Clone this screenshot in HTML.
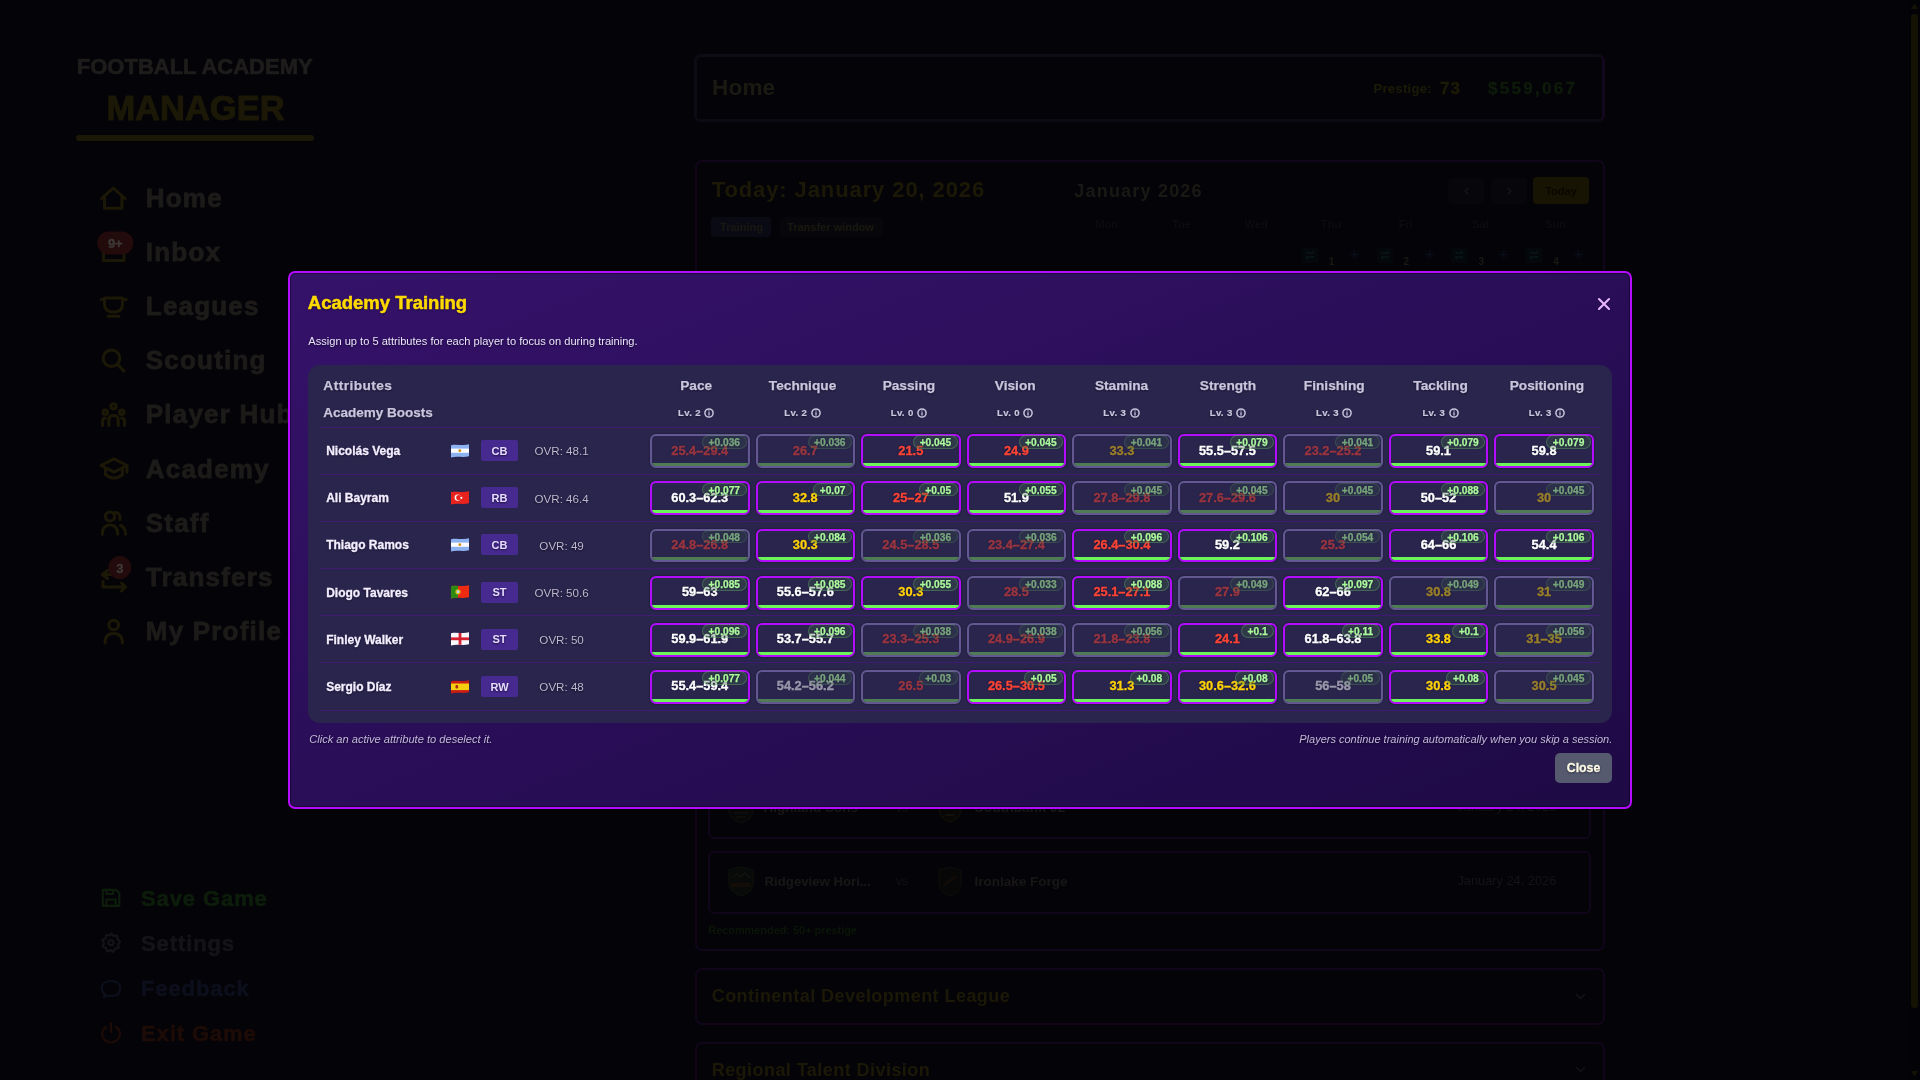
<!DOCTYPE html><html><head><meta charset="utf-8"><title>Academy Training</title><style>
*{margin:0;padding:0;box-sizing:border-box}
html,body{width:1920px;height:1080px;overflow:hidden;background:#040307;font-family:"Liberation Sans",sans-serif}
.t{position:absolute;white-space:nowrap;line-height:1}
.m .t,.ts{text-shadow:0 1px 2px rgba(8,4,30,.7)}
.a{position:absolute}
</style></head><body>
<div style="position:absolute;left:0;top:0;width:1920px;height:1080px;filter:brightness(.68)">
<div class="t" style="left:76.80px;top:56.38px;font-size:22px;color:#2c2a28;font-weight:bold;font-style:normal;-webkit-text-stroke:0.7px #2c2a28">FOOTBALL ACADEMY</div>
<div class="t" style="left:-304.50px;width:1000px;text-align:center;top:91.00px;font-size:34.5px;color:#29240a;font-weight:bold;font-style:normal;-webkit-text-stroke:1px #29240a">MANAGER</div>
<div class="a" style="left:76px;top:135px;width:238px;height:6px;border-radius:3px;background:#29240a"></div>
<div class="t" style="left:145.80px;top:184.69px;font-size:26px;color:#2a2825;font-weight:bold;font-style:normal;letter-spacing:1.2px;-webkit-text-stroke:0.8px #2a2825">Home</div>
<div class="t" style="left:145.80px;top:238.86px;font-size:26px;color:#2a2825;font-weight:bold;font-style:normal;letter-spacing:1.2px;-webkit-text-stroke:0.8px #2a2825">Inbox</div>
<div class="t" style="left:145.80px;top:293.03px;font-size:26px;color:#2a2825;font-weight:bold;font-style:normal;letter-spacing:1.2px;-webkit-text-stroke:0.8px #2a2825">Leagues</div>
<div class="t" style="left:145.80px;top:347.20px;font-size:26px;color:#2a2825;font-weight:bold;font-style:normal;letter-spacing:1.2px;-webkit-text-stroke:0.8px #2a2825">Scouting</div>
<div class="t" style="left:145.80px;top:401.37px;font-size:26px;color:#2a2825;font-weight:bold;font-style:normal;letter-spacing:1.2px;-webkit-text-stroke:0.8px #2a2825">Player Hub</div>
<div class="t" style="left:145.80px;top:455.54px;font-size:26px;color:#2a2825;font-weight:bold;font-style:normal;letter-spacing:1.2px;-webkit-text-stroke:0.8px #2a2825">Academy</div>
<div class="t" style="left:145.80px;top:509.71px;font-size:26px;color:#2a2825;font-weight:bold;font-style:normal;letter-spacing:1.2px;-webkit-text-stroke:0.8px #2a2825">Staff</div>
<div class="t" style="left:145.80px;top:563.88px;font-size:26px;color:#2a2825;font-weight:bold;font-style:normal;letter-spacing:1.2px;-webkit-text-stroke:0.8px #2a2825">Transfers</div>
<div class="t" style="left:145.80px;top:618.05px;font-size:26px;color:#2a2825;font-weight:bold;font-style:normal;letter-spacing:1.2px;-webkit-text-stroke:0.8px #2a2825">My Profile</div>
<svg class="a" style="left:0;top:0" width="300" height="1080" viewBox="0 0 300 1080" fill="none" stroke-linecap="round" stroke-linejoin="round">
<g stroke="#29240a" stroke-width="3">
<path d="M101.5 198.5 L113.3 188 L125 198.5 M104.5 196 V208.3 H122 V196"/>
<path d="M103.5 249 V260.5 H124 V249"/>
<path d="M104.5 298 H122.5 V304.5 Q122.5 312 113.5 312 Q104.5 312 104.5 304.5 Z M101.3 299.5 H104.5 M122.5 299.5 H126.3 M108 316.3 H119"/>
<circle cx="111.5" cy="358.3" r="8.3"/><path d="M117.5 364.5 L124 371"/>
<circle cx="113.5" cy="406.3" r="2.6"/><circle cx="105.3" cy="412.3" r="2.3"/><circle cx="121.7" cy="412.3" r="2.3"/>
<path d="M108.8 425.5 V419.5 Q108.8 415.5 113.5 415.5 Q118.2 415.5 118.2 419.5 V425.5 M102.5 425.5 V421 Q102.5 418 105.3 418 M124.5 425.5 V421 Q124.5 418 121.7 418"/>
<path d="M101 465.5 L114 458.8 L127 465.5 L114 472.2 Z M105.5 468.5 V474.5 Q114 481.5 122.5 474.5 V468.5 M127 465.5 V472"/>
<circle cx="110" cy="516.5" r="4.6"/><path d="M102.3 534.3 Q102.3 525 110 525 Q117.7 525 117.7 534.3 M115.5 512.3 Q120.5 513 120 519.5 M120.5 525.5 Q125.5 527 125.5 534.3"/>
<path d="M107.5 570.5 L102.3 574.5 L107.5 578.5 M102.3 574.5 H117 M103 581.5 V587 H125.5 M121.5 583 L125.5 587 L121.5 591"/>
<circle cx="113.7" cy="625" r="4.8"/><path d="M105 643 Q105 633.5 113.7 633.5 Q122.4 633.5 122.4 643"/>
</g>
<rect x="97.3" y="231.5" width="36" height="23" rx="11.5" fill="#341010"/>
<circle cx="119.8" cy="567.6" r="11.5" fill="#341010"/>
<g stroke-width="2.2">
<path stroke="#132a10" d="M102.8 889.8 H116 L119.3 893 V905.8 H102.8 Z M106.3 905.8 V899.5 H115.7 V905.8 M106.5 890 V894 H113 V890"/>
<path stroke="#1e1d22" d="M111 933.5 L113.5 936 L117 935.5 L117.5 939 L120 941.5 L118 944.3 L118.8 947.8 L115.3 948.5 L113 951.8 L110.5 950 L107 951.5 L106 948 L102.5 946.5 L104 943.3 L102.3 940 L105.5 938.5 L106.3 935 L109.8 935.5 Z"/>
<circle stroke="#1e1d22" cx="111" cy="942.7" r="2.5"/>
<path stroke="#121628" d="M111 981 Q120.2 981 120.2 988.5 Q120.2 996 111 996 Q109 996 107 995.5 L104 997 L104.8 994 Q101.8 992 101.8 988.5 Q101.8 981 111 981 Z"/>
<path stroke="#2a100a" d="M106 1027 Q102 1030 102 1033.5 A9 9 0 0 0 120 1033.5 Q120 1030 116 1027 M111 1023 V1032"/>
</g>
</svg>
<div class="t" style="left:-384.70px;width:1000px;text-align:center;top:236.80px;font-size:13px;color:#5a5450;font-weight:bold;font-style:normal;-webkit-text-stroke:0.3px #5a5450">9+</div>
<div class="t" style="left:-380.20px;width:1000px;text-align:center;top:561.50px;font-size:13px;color:#5a5450;font-weight:bold;font-style:normal;-webkit-text-stroke:0.3px #5a5450">3</div>
<div class="t" style="left:141.00px;top:887.58px;font-size:22px;color:#132a10;font-weight:bold;font-style:normal;letter-spacing:0.9px;-webkit-text-stroke:0.6px #132a10">Save Game</div>
<div class="t" style="left:141.00px;top:932.58px;font-size:22px;color:#1e1d22;font-weight:bold;font-style:normal;letter-spacing:0.9px;-webkit-text-stroke:0.6px #1e1d22">Settings</div>
<div class="t" style="left:141.00px;top:977.58px;font-size:22px;color:#121628;font-weight:bold;font-style:normal;letter-spacing:0.9px;-webkit-text-stroke:0.6px #121628">Feedback</div>
<div class="t" style="left:141.00px;top:1022.58px;font-size:22px;color:#2a100a;font-weight:bold;font-style:normal;letter-spacing:0.9px;-webkit-text-stroke:0.6px #2a100a">Exit Game</div>
<div class="a" style="left:694px;top:54px;width:911px;height:68px;border:3px solid #11101c;border-right-color:#1c0a2c;border-top-color:#14101f;border-radius:7px"></div>
<div class="t" style="left:712.00px;top:76.65px;font-size:22.5px;color:#28261a;font-weight:bold;font-style:normal;letter-spacing:0.2px">Home</div>
<div class="t" style="left:1373.50px;top:82.00px;font-size:13px;color:#29270a;font-weight:bold;font-style:normal;letter-spacing:0.3px">Prestige:</div>
<div class="t" style="left:1440.00px;top:79.61px;font-size:17px;color:#29270a;font-weight:bold;font-style:normal;letter-spacing:1px;-webkit-text-stroke:0.4px #29270a">73</div>
<div class="t" style="left:1488.00px;top:79.61px;font-size:17px;color:#14260f;font-weight:bold;font-style:normal;letter-spacing:2.3px;-webkit-text-stroke:0.4px #14260f">$559,067</div>
<div class="a" style="left:695px;top:160px;width:910px;height:791px;border:2px solid #170826;border-radius:7px"></div>
<div class="t" style="left:711.70px;top:178.88px;font-size:22px;color:#28240a;font-weight:bold;font-style:normal;letter-spacing:0.9px">Today: January 20, 2026</div>
<div class="a" style="left:711px;top:217px;width:60px;height:20px;border-radius:3px;background:#0d0f1c"></div>
<div class="t" style="left:241.50px;width:1000px;text-align:center;top:221.69px;font-size:11px;color:#242218;font-weight:bold;font-style:normal;">Training</div>
<div class="a" style="left:780px;top:217px;width:103px;height:20px;border-radius:3px;background:#0a090e"></div>
<div class="t" style="left:330.50px;width:1000px;text-align:center;top:221.69px;font-size:11px;color:#242218;font-weight:bold;font-style:normal;">Transfer window</div>
<div class="t" style="left:1074.30px;top:181.76px;font-size:18px;color:#26241e;font-weight:bold;font-style:normal;letter-spacing:1.2px">January 2026</div>
<div class="a" style="left:1448px;top:178px;width:36px;height:26px;border-radius:4px;background:#0a090e"></div>
<div class="a" style="left:1491px;top:178px;width:36px;height:26px;border-radius:4px;background:#0a090e"></div>
<svg class="a" style="left:1448px;top:178px" width="80" height="26" viewBox="0 0 80 26" fill="none" stroke="#1e1c24" stroke-width="1.5" stroke-linecap="round"><path d="M20 10L17 13L20 16"/><path d="M60 10L63 13L60 16"/></svg>
<div class="a" style="left:1533px;top:177px;width:56px;height:27px;border-radius:4px;background:#231e04"></div>
<div class="t" style="left:1061.00px;width:1000px;text-align:center;top:185.69px;font-size:11px;color:#0c0a02;font-weight:bold;font-style:normal;">Today</div>
<div class="t" style="left:606.70px;width:1000px;text-align:center;top:219.19px;font-size:11px;color:#121018;font-weight:bold;font-style:normal;">Mon</div>
<div class="t" style="left:681.50px;width:1000px;text-align:center;top:219.19px;font-size:11px;color:#121018;font-weight:bold;font-style:normal;">Tue</div>
<div class="t" style="left:756.30px;width:1000px;text-align:center;top:219.19px;font-size:11px;color:#121018;font-weight:bold;font-style:normal;">Wed</div>
<div class="t" style="left:831.10px;width:1000px;text-align:center;top:219.19px;font-size:11px;color:#121018;font-weight:bold;font-style:normal;">Thu</div>
<div class="t" style="left:905.90px;width:1000px;text-align:center;top:219.19px;font-size:11px;color:#121018;font-weight:bold;font-style:normal;">Fri</div>
<div class="t" style="left:980.70px;width:1000px;text-align:center;top:219.19px;font-size:11px;color:#121018;font-weight:bold;font-style:normal;">Sat</div>
<div class="t" style="left:1055.50px;width:1000px;text-align:center;top:219.19px;font-size:11px;color:#121018;font-weight:bold;font-style:normal;">Sun</div>
<div class="a" style="left:1301.8px;top:248px;width:16px;height:14.5px;border-radius:2px;background:#080c10"></div>
<svg class="a" style="left:1303.8px;top:250px" width="12" height="10" viewBox="0 0 12 10" fill="none" stroke="#0c2024" stroke-width="1.3"><path d="M2 3H10M8 1L10 3M10 7H2M4 9L2 7"/></svg>
<svg class="a" style="left:1348.8px;top:249px" width="11" height="11" viewBox="0 0 11 11" fill="none" stroke="#0c1220" stroke-width="1"><path d="M5.5 0.5V10.5M0.5 5.5H10.5M2 2L9 9M9 2L2 9"/></svg>
<div class="t" style="left:831.60px;width:1000px;text-align:center;top:257.24px;font-size:10px;color:#26241e;font-weight:bold;font-style:normal;">1</div>
<div class="a" style="left:1376.6px;top:248px;width:16px;height:14.5px;border-radius:2px;background:#080c10"></div>
<svg class="a" style="left:1378.6px;top:250px" width="12" height="10" viewBox="0 0 12 10" fill="none" stroke="#0c2024" stroke-width="1.3"><path d="M2 3H10M8 1L10 3M10 7H2M4 9L2 7"/></svg>
<svg class="a" style="left:1423.6px;top:249px" width="11" height="11" viewBox="0 0 11 11" fill="none" stroke="#0c1220" stroke-width="1"><path d="M5.5 0.5V10.5M0.5 5.5H10.5M2 2L9 9M9 2L2 9"/></svg>
<div class="t" style="left:906.40px;width:1000px;text-align:center;top:257.24px;font-size:10px;color:#26241e;font-weight:bold;font-style:normal;">2</div>
<div class="a" style="left:1451.4px;top:248px;width:16px;height:14.5px;border-radius:2px;background:#080c10"></div>
<svg class="a" style="left:1453.4px;top:250px" width="12" height="10" viewBox="0 0 12 10" fill="none" stroke="#0c2024" stroke-width="1.3"><path d="M2 3H10M8 1L10 3M10 7H2M4 9L2 7"/></svg>
<svg class="a" style="left:1498.4px;top:249px" width="11" height="11" viewBox="0 0 11 11" fill="none" stroke="#0c1220" stroke-width="1"><path d="M5.5 0.5V10.5M0.5 5.5H10.5M2 2L9 9M9 2L2 9"/></svg>
<div class="t" style="left:981.20px;width:1000px;text-align:center;top:257.24px;font-size:10px;color:#26241e;font-weight:bold;font-style:normal;">3</div>
<div class="a" style="left:1526.2px;top:248px;width:16px;height:14.5px;border-radius:2px;background:#080c10"></div>
<svg class="a" style="left:1528.2px;top:250px" width="12" height="10" viewBox="0 0 12 10" fill="none" stroke="#0c2024" stroke-width="1.3"><path d="M2 3H10M8 1L10 3M10 7H2M4 9L2 7"/></svg>
<svg class="a" style="left:1573.2px;top:249px" width="11" height="11" viewBox="0 0 11 11" fill="none" stroke="#0c1220" stroke-width="1"><path d="M5.5 0.5V10.5M0.5 5.5H10.5M2 2L9 9M9 2L2 9"/></svg>
<div class="t" style="left:1056.00px;width:1000px;text-align:center;top:257.24px;font-size:10px;color:#26241e;font-weight:bold;font-style:normal;">4</div>
<div class="a" style="left:708px;top:779px;width:883px;height:60px;border:2px solid #170826;border-radius:6px"></div>
<svg class="a" style="left:726px;top:793px" width="30" height="31" viewBox="0 0 30 31"><path d="M3 4L15 1L27 4V17Q27 26 15 30Q3 26 3 17Z" fill="#0a0a0c" stroke="#121214" stroke-width="1.5"/><path d="M8 20H22M10 24H20" stroke="#1c1c1e" stroke-width="1.2"/></svg>
<svg class="a" style="left:936px;top:792px" width="28" height="31" viewBox="0 0 28 31"><path d="M3 4L14 1L25 4V17Q25 26 14 30Q3 26 3 17Z" fill="#0c0b08" stroke="#16140c" stroke-width="1.5"/><path d="M9 23H19" stroke="#221e10" stroke-width="1.5"/></svg>
<div class="t" style="left:763.50px;top:801.47px;font-size:13.5px;color:#242220;font-weight:bold;font-style:normal;">Highland Sons</div>
<div class="t" style="left:402.00px;width:1000px;text-align:center;top:801.84px;font-size:12px;color:#1a1820;font-weight:normal;font-style:normal;">vs</div>
<div class="t" style="left:974.60px;top:801.22px;font-size:13.8px;color:#242220;font-weight:bold;font-style:normal;">Southbank 02</div>
<div class="t" style="left:556.30px;width:1000px;text-align:right;top:801.16px;font-size:12.8px;color:#1e1d24;font-weight:normal;font-style:normal;">January 24, 2026</div>
<div class="a" style="left:708px;top:851px;width:883px;height:63px;border:2px solid #170826;border-radius:6px"></div>
<svg class="a" style="left:726px;top:866px" width="30" height="31" viewBox="0 0 30 31"><path d="M3 4L15 1L27 4V17Q27 26 15 30Q3 26 3 17Z" fill="#0a0f0c" stroke="#10160f" stroke-width="1.5"/><path d="M6 12L11 8L15 11L19 7L24 12" fill="none" stroke="#1a1a16" stroke-width="1.5"/><rect x="5" y="17" width="20" height="4" fill="#1c120a"/></svg>
<div class="t" style="left:764.60px;top:875.33px;font-size:13.2px;color:#242220;font-weight:bold;font-style:normal;">Ridgeview Hori...</div>
<div class="t" style="left:402.00px;width:1000px;text-align:center;top:875.42px;font-size:12.5px;color:#1a1820;font-weight:normal;font-style:normal;">vs</div>
<svg class="a" style="left:936px;top:866px" width="28" height="31" viewBox="0 0 28 31"><path d="M3 4L14 1L25 4V17Q25 26 14 30Q3 26 3 17Z" fill="#0c0a0a" stroke="#12100e" stroke-width="1.5"/><path d="M7 20L20 10" stroke="#1c120c" stroke-width="2"/></svg>
<div class="t" style="left:974.60px;top:875.07px;font-size:13.5px;color:#242220;font-weight:bold;font-style:normal;">Ironlake Forge</div>
<div class="t" style="left:556.30px;width:1000px;text-align:right;top:875.16px;font-size:12.8px;color:#1e1d24;font-weight:normal;font-style:normal;">January 24, 2026</div>
<div class="t" style="left:708.30px;top:925.17px;font-size:10.9px;color:#0f200c;font-weight:bold;font-style:normal;">Recommended: 50+ prestige</div>
<div class="a" style="left:695px;top:968px;width:910px;height:57px;border:2px solid #170826;border-radius:7px"></div>
<div class="t" style="left:711.70px;top:987.26px;font-size:18px;color:#28240a;font-weight:bold;font-style:normal;letter-spacing:0.45px">Continental Development League</div>
<div class="a" style="left:695px;top:1042px;width:910px;height:60px;border:2px solid #170826;border-radius:7px"></div>
<div class="t" style="left:711.70px;top:1060.56px;font-size:18px;color:#28240a;font-weight:bold;font-style:normal;letter-spacing:0.45px">Regional Talent Division</div>
<svg class="a" style="left:1574px;top:991px" width="13" height="84" viewBox="0 0 13 84" fill="none" stroke="#1e1c22" stroke-width="1.4" stroke-linecap="round"><path d="M2.5 3.5L6.5 7.5L10.5 3.5"/><path d="M2.5 76.5L6.5 80.5L10.5 76.5"/></svg>
<div class="a" style="left:1909px;top:0;width:11px;height:1080px;background:#05040b"></div>
<div class="a" style="left:1911px;top:14px;width:7px;height:994px;border-radius:3px;background:#1e1b04"></div>
<svg class="a" style="left:1909px;top:0" width="11" height="1080" viewBox="0 0 11 1080"><path d="M2 9L5.5 3.5L9 9Z" fill="#1e1b04"/><path d="M2 1071L5.5 1076.5L9 1071Z" fill="#1e1b04"/></svg>
</div>
<div class="m" style="position:absolute;left:0;top:0">
<div class="a" style="left:288px;top:271px;width:1344px;height:538px;border:2px solid #b30cff;border-radius:7px;box-shadow:inset 0 0 1px 1px rgba(0,0,0,.35);background:linear-gradient(to bottom right,#35126a,#1e0a45)"></div>
<div class="t" style="left:307.80px;top:294.14px;font-size:18.5px;color:#ffda00;font-weight:bold;font-style:normal;-webkit-text-stroke:0.5px #ffda00">Academy Training</div>
<div class="t" style="left:308.30px;top:335.60px;font-size:11.1px;color:#ece4fa;font-weight:normal;font-style:normal;">Assign up to 5 attributes for each player to focus on during training.</div>
<svg class="a" style="left:1596px;top:295.8px" width="16" height="16" viewBox="0 0 16 16"><path d="M3 3L13 13M13 3L3 13" stroke="#e8b8ff" stroke-width="2.1" stroke-linecap="round"/></svg>
<div class="a" style="left:308px;top:364.5px;width:1304px;height:358.5px;border-radius:12px;background:#2a254c"></div>
<div class="t" style="left:323.30px;top:379.20px;font-size:13.7px;color:#c9c5dc;font-weight:bold;font-style:normal;letter-spacing:0.45px;-webkit-text-stroke:0.25px #c9c5dc">Attributes</div>
<div class="t" style="left:323.30px;top:406.47px;font-size:13.5px;color:#c9c5dc;font-weight:bold;font-style:normal;-webkit-text-stroke:0.25px #c9c5dc">Academy Boosts</div>
<div class="t" style="left:196.20px;width:1000px;text-align:center;top:379.20px;font-size:13.7px;color:#c9c5dc;font-weight:bold;font-style:normal;-webkit-text-stroke:0.25px #c9c5dc">Pace</div>
<div class="t" style="left:678.00px;top:407.87px;font-size:9.6px;color:#c9c5dc;font-weight:bold;font-style:normal;letter-spacing:0.35px;-webkit-text-stroke:0.2px #c9c5dc">Lv. 2</div>
<svg class="a" style="left:704.30px;top:408.3px" width="10" height="10" viewBox="0 0 10 10"><circle cx="5" cy="5" r="4.1" fill="none" stroke="#c9c5dc" stroke-width="1.5"/><path d="M5 4.2V7.4" stroke="#c9c5dc" stroke-width="1.3"/><circle cx="5" cy="2.9" r="0.7" fill="#c9c5dc"/></svg>
<div class="t" style="left:302.54px;width:1000px;text-align:center;top:379.20px;font-size:13.7px;color:#c9c5dc;font-weight:bold;font-style:normal;-webkit-text-stroke:0.25px #c9c5dc">Technique</div>
<div class="t" style="left:784.34px;top:407.87px;font-size:9.6px;color:#c9c5dc;font-weight:bold;font-style:normal;letter-spacing:0.35px;-webkit-text-stroke:0.2px #c9c5dc">Lv. 2</div>
<svg class="a" style="left:810.64px;top:408.3px" width="10" height="10" viewBox="0 0 10 10"><circle cx="5" cy="5" r="4.1" fill="none" stroke="#c9c5dc" stroke-width="1.5"/><path d="M5 4.2V7.4" stroke="#c9c5dc" stroke-width="1.3"/><circle cx="5" cy="2.9" r="0.7" fill="#c9c5dc"/></svg>
<div class="t" style="left:408.88px;width:1000px;text-align:center;top:379.20px;font-size:13.7px;color:#c9c5dc;font-weight:bold;font-style:normal;-webkit-text-stroke:0.25px #c9c5dc">Passing</div>
<div class="t" style="left:890.68px;top:407.87px;font-size:9.6px;color:#c9c5dc;font-weight:bold;font-style:normal;letter-spacing:0.35px;-webkit-text-stroke:0.2px #c9c5dc">Lv. 0</div>
<svg class="a" style="left:916.98px;top:408.3px" width="10" height="10" viewBox="0 0 10 10"><circle cx="5" cy="5" r="4.1" fill="none" stroke="#c9c5dc" stroke-width="1.5"/><path d="M5 4.2V7.4" stroke="#c9c5dc" stroke-width="1.3"/><circle cx="5" cy="2.9" r="0.7" fill="#c9c5dc"/></svg>
<div class="t" style="left:515.22px;width:1000px;text-align:center;top:379.20px;font-size:13.7px;color:#c9c5dc;font-weight:bold;font-style:normal;-webkit-text-stroke:0.25px #c9c5dc">Vision</div>
<div class="t" style="left:997.02px;top:407.87px;font-size:9.6px;color:#c9c5dc;font-weight:bold;font-style:normal;letter-spacing:0.35px;-webkit-text-stroke:0.2px #c9c5dc">Lv. 0</div>
<svg class="a" style="left:1023.32px;top:408.3px" width="10" height="10" viewBox="0 0 10 10"><circle cx="5" cy="5" r="4.1" fill="none" stroke="#c9c5dc" stroke-width="1.5"/><path d="M5 4.2V7.4" stroke="#c9c5dc" stroke-width="1.3"/><circle cx="5" cy="2.9" r="0.7" fill="#c9c5dc"/></svg>
<div class="t" style="left:621.56px;width:1000px;text-align:center;top:379.20px;font-size:13.7px;color:#c9c5dc;font-weight:bold;font-style:normal;-webkit-text-stroke:0.25px #c9c5dc">Stamina</div>
<div class="t" style="left:1103.36px;top:407.87px;font-size:9.6px;color:#c9c5dc;font-weight:bold;font-style:normal;letter-spacing:0.35px;-webkit-text-stroke:0.2px #c9c5dc">Lv. 3</div>
<svg class="a" style="left:1129.66px;top:408.3px" width="10" height="10" viewBox="0 0 10 10"><circle cx="5" cy="5" r="4.1" fill="none" stroke="#c9c5dc" stroke-width="1.5"/><path d="M5 4.2V7.4" stroke="#c9c5dc" stroke-width="1.3"/><circle cx="5" cy="2.9" r="0.7" fill="#c9c5dc"/></svg>
<div class="t" style="left:727.90px;width:1000px;text-align:center;top:379.20px;font-size:13.7px;color:#c9c5dc;font-weight:bold;font-style:normal;-webkit-text-stroke:0.25px #c9c5dc">Strength</div>
<div class="t" style="left:1209.70px;top:407.87px;font-size:9.6px;color:#c9c5dc;font-weight:bold;font-style:normal;letter-spacing:0.35px;-webkit-text-stroke:0.2px #c9c5dc">Lv. 3</div>
<svg class="a" style="left:1236.00px;top:408.3px" width="10" height="10" viewBox="0 0 10 10"><circle cx="5" cy="5" r="4.1" fill="none" stroke="#c9c5dc" stroke-width="1.5"/><path d="M5 4.2V7.4" stroke="#c9c5dc" stroke-width="1.3"/><circle cx="5" cy="2.9" r="0.7" fill="#c9c5dc"/></svg>
<div class="t" style="left:834.24px;width:1000px;text-align:center;top:379.20px;font-size:13.7px;color:#c9c5dc;font-weight:bold;font-style:normal;-webkit-text-stroke:0.25px #c9c5dc">Finishing</div>
<div class="t" style="left:1316.04px;top:407.87px;font-size:9.6px;color:#c9c5dc;font-weight:bold;font-style:normal;letter-spacing:0.35px;-webkit-text-stroke:0.2px #c9c5dc">Lv. 3</div>
<svg class="a" style="left:1342.34px;top:408.3px" width="10" height="10" viewBox="0 0 10 10"><circle cx="5" cy="5" r="4.1" fill="none" stroke="#c9c5dc" stroke-width="1.5"/><path d="M5 4.2V7.4" stroke="#c9c5dc" stroke-width="1.3"/><circle cx="5" cy="2.9" r="0.7" fill="#c9c5dc"/></svg>
<div class="t" style="left:940.58px;width:1000px;text-align:center;top:379.20px;font-size:13.7px;color:#c9c5dc;font-weight:bold;font-style:normal;-webkit-text-stroke:0.25px #c9c5dc">Tackling</div>
<div class="t" style="left:1422.38px;top:407.87px;font-size:9.6px;color:#c9c5dc;font-weight:bold;font-style:normal;letter-spacing:0.35px;-webkit-text-stroke:0.2px #c9c5dc">Lv. 3</div>
<svg class="a" style="left:1448.68px;top:408.3px" width="10" height="10" viewBox="0 0 10 10"><circle cx="5" cy="5" r="4.1" fill="none" stroke="#c9c5dc" stroke-width="1.5"/><path d="M5 4.2V7.4" stroke="#c9c5dc" stroke-width="1.3"/><circle cx="5" cy="2.9" r="0.7" fill="#c9c5dc"/></svg>
<div class="t" style="left:1046.92px;width:1000px;text-align:center;top:379.20px;font-size:13.7px;color:#c9c5dc;font-weight:bold;font-style:normal;-webkit-text-stroke:0.25px #c9c5dc">Positioning</div>
<div class="t" style="left:1528.72px;top:407.87px;font-size:9.6px;color:#c9c5dc;font-weight:bold;font-style:normal;letter-spacing:0.35px;-webkit-text-stroke:0.2px #c9c5dc">Lv. 3</div>
<svg class="a" style="left:1555.02px;top:408.3px" width="10" height="10" viewBox="0 0 10 10"><circle cx="5" cy="5" r="4.1" fill="none" stroke="#c9c5dc" stroke-width="1.5"/><path d="M5 4.2V7.4" stroke="#c9c5dc" stroke-width="1.3"/><circle cx="5" cy="2.9" r="0.7" fill="#c9c5dc"/></svg>
<div class="a" style="left:320px;top:426.50px;width:1280px;height:1px;background:#3e1a72"></div>
<div class="a" style="left:320px;top:473.67px;width:1280px;height:1px;background:#3e1a72"></div>
<div class="a" style="left:320px;top:520.84px;width:1280px;height:1px;background:#3e1a72"></div>
<div class="a" style="left:320px;top:568.01px;width:1280px;height:1px;background:#3e1a72"></div>
<div class="a" style="left:320px;top:615.18px;width:1280px;height:1px;background:#3e1a72"></div>
<div class="a" style="left:320px;top:662.35px;width:1280px;height:1px;background:#3e1a72"></div>
<div class="a" style="left:320px;top:709.52px;width:1280px;height:1px;background:#3e1a72"></div>
<div class="t" style="left:326.20px;top:445.14px;font-size:12px;color:#f4eeff;font-weight:bold;font-style:normal;-webkit-text-stroke:0.3px #f4eeff">Nicolás Vega</div>
<svg class="a" style="left:450.8px;top:443.80px" width="18" height="14" viewBox="0 0 18 14"><defs><clipPath id="fc0"><path d="M0 1.2 C6 -0.2 12 2.2 18 0.3 V12.3 C12 14 6 11.8 0 13.6 Z"/></clipPath></defs><g clip-path="url(#fc0)"><rect width="18" height="14" fill="#8db2f2"/><rect y="4.6" width="18" height="4.2" fill="#fbfbff"/><circle cx="8.8" cy="6.7" r="1.4" fill="#d0900c"/></g></svg>
<div class="a" style="left:481px;top:440.00px;width:37px;height:21px;border-radius:2px;background:#472a90"></div>
<div class="t" style="left:-0.50px;width:1000px;text-align:center;top:445.79px;font-size:11px;color:#e6dcff;font-weight:bold;font-style:normal;">CB</div>
<div class="t" style="left:61.60px;width:1000px;text-align:center;top:445.48px;font-size:11.6px;color:#bdb8cc;font-weight:normal;font-style:normal;">OVR: 48.1</div>
<div class="a" style="left:650.00px;top:434.20px;width:99.5px;height:33.8px;border:2px solid #8a7cc0;border-radius:6px;box-shadow:0 0 2px rgba(0,8,8,.7);opacity:.6;overflow:hidden"><div class="a" style="left:0;right:0;bottom:0;height:3px;background:#6ab85a"></div></div>
<div class="t" style="left:649.75px;width:100px;text-align:center;top:444.56px;font-size:12.8px;font-weight:bold;color:#ff4535;text-shadow:0 0 2px rgba(10,8,40,.9);-webkit-text-stroke:0.35px #ff4535;opacity:.52;">25.4–29.4</div>
<div class="t" style="left:546.50px;width:200px;top:433.40px;height:13.6px;opacity:.6;text-align:right"><span style="display:inline-block;height:13.6px;line-height:13px;padding:0 5.5px;border-radius:7px;border:1px solid rgba(110,190,110,.35);background:rgba(60,110,70,.28);font-size:10.2px;font-weight:bold;color:#acfa9c;-webkit-text-stroke:0.25px #acfa9c;text-shadow:0 0 2px rgba(10,8,40,.9)">+0.036</span></div>
<div class="a" style="left:755.54px;top:434.20px;width:99.5px;height:33.8px;border:2px solid #8a7cc0;border-radius:6px;box-shadow:0 0 2px rgba(0,8,8,.7);opacity:.6;overflow:hidden"><div class="a" style="left:0;right:0;bottom:0;height:3px;background:#6ab85a"></div></div>
<div class="t" style="left:755.29px;width:100px;text-align:center;top:444.56px;font-size:12.8px;font-weight:bold;color:#ff4535;text-shadow:0 0 2px rgba(10,8,40,.9);-webkit-text-stroke:0.35px #ff4535;opacity:.52;">26.7</div>
<div class="t" style="left:652.04px;width:200px;top:433.40px;height:13.6px;opacity:.6;text-align:right"><span style="display:inline-block;height:13.6px;line-height:13px;padding:0 5.5px;border-radius:7px;border:1px solid rgba(110,190,110,.35);background:rgba(60,110,70,.28);font-size:10.2px;font-weight:bold;color:#acfa9c;-webkit-text-stroke:0.25px #acfa9c;text-shadow:0 0 2px rgba(10,8,40,.9)">+0.036</span></div>
<div class="a" style="left:861.08px;top:434.20px;width:99.5px;height:33.8px;border:2px solid #b40cff;border-radius:6px;box-shadow:0 0 2px rgba(0,8,8,.7);overflow:hidden"><div class="a" style="left:0;right:0;bottom:0;height:3px;background:#6cf55a"></div></div>
<div class="t" style="left:860.83px;width:100px;text-align:center;top:444.56px;font-size:12.8px;font-weight:bold;color:#ff4535;text-shadow:0 0 2px rgba(10,8,40,.9);-webkit-text-stroke:0.35px #ff4535;">21.5</div>
<div class="t" style="left:757.58px;width:200px;top:433.40px;height:13.6px;text-align:right"><span style="display:inline-block;height:13.6px;line-height:13px;padding:0 5.5px;border-radius:7px;border:1px solid rgba(110,190,110,.35);background:rgba(60,110,70,.28);font-size:10.2px;font-weight:bold;color:#acfa9c;-webkit-text-stroke:0.25px #acfa9c;text-shadow:0 0 2px rgba(10,8,40,.9)">+0.045</span></div>
<div class="a" style="left:966.62px;top:434.20px;width:99.5px;height:33.8px;border:2px solid #b40cff;border-radius:6px;box-shadow:0 0 2px rgba(0,8,8,.7);overflow:hidden"><div class="a" style="left:0;right:0;bottom:0;height:3px;background:#6cf55a"></div></div>
<div class="t" style="left:966.37px;width:100px;text-align:center;top:444.56px;font-size:12.8px;font-weight:bold;color:#ff4535;text-shadow:0 0 2px rgba(10,8,40,.9);-webkit-text-stroke:0.35px #ff4535;">24.9</div>
<div class="t" style="left:863.12px;width:200px;top:433.40px;height:13.6px;text-align:right"><span style="display:inline-block;height:13.6px;line-height:13px;padding:0 5.5px;border-radius:7px;border:1px solid rgba(110,190,110,.35);background:rgba(60,110,70,.28);font-size:10.2px;font-weight:bold;color:#acfa9c;-webkit-text-stroke:0.25px #acfa9c;text-shadow:0 0 2px rgba(10,8,40,.9)">+0.045</span></div>
<div class="a" style="left:1072.16px;top:434.20px;width:99.5px;height:33.8px;border:2px solid #8a7cc0;border-radius:6px;box-shadow:0 0 2px rgba(0,8,8,.7);opacity:.6;overflow:hidden"><div class="a" style="left:0;right:0;bottom:0;height:3px;background:#6ab85a"></div></div>
<div class="t" style="left:1071.91px;width:100px;text-align:center;top:444.56px;font-size:12.8px;font-weight:bold;color:#ffd20a;text-shadow:0 0 2px rgba(10,8,40,.9);-webkit-text-stroke:0.35px #ffd20a;opacity:.52;">33.3</div>
<div class="t" style="left:968.66px;width:200px;top:433.40px;height:13.6px;opacity:.6;text-align:right"><span style="display:inline-block;height:13.6px;line-height:13px;padding:0 5.5px;border-radius:7px;border:1px solid rgba(110,190,110,.35);background:rgba(60,110,70,.28);font-size:10.2px;font-weight:bold;color:#acfa9c;-webkit-text-stroke:0.25px #acfa9c;text-shadow:0 0 2px rgba(10,8,40,.9)">+0.041</span></div>
<div class="a" style="left:1177.70px;top:434.20px;width:99.5px;height:33.8px;border:2px solid #b40cff;border-radius:6px;box-shadow:0 0 2px rgba(0,8,8,.7);overflow:hidden"><div class="a" style="left:0;right:0;bottom:0;height:3px;background:#6cf55a"></div></div>
<div class="t" style="left:1177.45px;width:100px;text-align:center;top:444.56px;font-size:12.8px;font-weight:bold;color:#ffffff;text-shadow:0 0 2px rgba(10,8,40,.9);-webkit-text-stroke:0.35px #ffffff;">55.5–57.5</div>
<div class="t" style="left:1074.20px;width:200px;top:433.40px;height:13.6px;text-align:right"><span style="display:inline-block;height:13.6px;line-height:13px;padding:0 5.5px;border-radius:7px;border:1px solid rgba(110,190,110,.35);background:rgba(60,110,70,.28);font-size:10.2px;font-weight:bold;color:#acfa9c;-webkit-text-stroke:0.25px #acfa9c;text-shadow:0 0 2px rgba(10,8,40,.9)">+0.079</span></div>
<div class="a" style="left:1283.24px;top:434.20px;width:99.5px;height:33.8px;border:2px solid #8a7cc0;border-radius:6px;box-shadow:0 0 2px rgba(0,8,8,.7);opacity:.6;overflow:hidden"><div class="a" style="left:0;right:0;bottom:0;height:3px;background:#6ab85a"></div></div>
<div class="t" style="left:1282.99px;width:100px;text-align:center;top:444.56px;font-size:12.8px;font-weight:bold;color:#ff4535;text-shadow:0 0 2px rgba(10,8,40,.9);-webkit-text-stroke:0.35px #ff4535;opacity:.52;">23.2–25.2</div>
<div class="t" style="left:1179.74px;width:200px;top:433.40px;height:13.6px;opacity:.6;text-align:right"><span style="display:inline-block;height:13.6px;line-height:13px;padding:0 5.5px;border-radius:7px;border:1px solid rgba(110,190,110,.35);background:rgba(60,110,70,.28);font-size:10.2px;font-weight:bold;color:#acfa9c;-webkit-text-stroke:0.25px #acfa9c;text-shadow:0 0 2px rgba(10,8,40,.9)">+0.041</span></div>
<div class="a" style="left:1388.78px;top:434.20px;width:99.5px;height:33.8px;border:2px solid #b40cff;border-radius:6px;box-shadow:0 0 2px rgba(0,8,8,.7);overflow:hidden"><div class="a" style="left:0;right:0;bottom:0;height:3px;background:#6cf55a"></div></div>
<div class="t" style="left:1388.53px;width:100px;text-align:center;top:444.56px;font-size:12.8px;font-weight:bold;color:#ffffff;text-shadow:0 0 2px rgba(10,8,40,.9);-webkit-text-stroke:0.35px #ffffff;">59.1</div>
<div class="t" style="left:1285.28px;width:200px;top:433.40px;height:13.6px;text-align:right"><span style="display:inline-block;height:13.6px;line-height:13px;padding:0 5.5px;border-radius:7px;border:1px solid rgba(110,190,110,.35);background:rgba(60,110,70,.28);font-size:10.2px;font-weight:bold;color:#acfa9c;-webkit-text-stroke:0.25px #acfa9c;text-shadow:0 0 2px rgba(10,8,40,.9)">+0.079</span></div>
<div class="a" style="left:1494.32px;top:434.20px;width:99.5px;height:33.8px;border:2px solid #b40cff;border-radius:6px;box-shadow:0 0 2px rgba(0,8,8,.7);overflow:hidden"><div class="a" style="left:0;right:0;bottom:0;height:3px;background:#6cf55a"></div></div>
<div class="t" style="left:1494.07px;width:100px;text-align:center;top:444.56px;font-size:12.8px;font-weight:bold;color:#ffffff;text-shadow:0 0 2px rgba(10,8,40,.9);-webkit-text-stroke:0.35px #ffffff;">59.8</div>
<div class="t" style="left:1390.82px;width:200px;top:433.40px;height:13.6px;text-align:right"><span style="display:inline-block;height:13.6px;line-height:13px;padding:0 5.5px;border-radius:7px;border:1px solid rgba(110,190,110,.35);background:rgba(60,110,70,.28);font-size:10.2px;font-weight:bold;color:#acfa9c;-webkit-text-stroke:0.25px #acfa9c;text-shadow:0 0 2px rgba(10,8,40,.9)">+0.079</span></div>
<div class="t" style="left:326.20px;top:492.31px;font-size:12px;color:#f4eeff;font-weight:bold;font-style:normal;-webkit-text-stroke:0.3px #f4eeff">Ali Bayram</div>
<svg class="a" style="left:450.8px;top:490.97px" width="18" height="14" viewBox="0 0 18 14"><defs><clipPath id="fc1"><path d="M0 1.2 C6 -0.2 12 2.2 18 0.3 V12.3 C12 14 6 11.8 0 13.6 Z"/></clipPath></defs><g clip-path="url(#fc1)"><rect width="18" height="14" fill="#e8231e"/><circle cx="6.8" cy="6.6" r="3.2" fill="#fff"/><circle cx="7.8" cy="6.6" r="2.6" fill="#e8231e"/><circle cx="10.3" cy="6.8" r="1.1" fill="#fff"/></g></svg>
<div class="a" style="left:481px;top:487.17px;width:37px;height:21px;border-radius:2px;background:#472a90"></div>
<div class="t" style="left:-0.50px;width:1000px;text-align:center;top:492.96px;font-size:11px;color:#e6dcff;font-weight:bold;font-style:normal;">RB</div>
<div class="t" style="left:61.60px;width:1000px;text-align:center;top:492.65px;font-size:11.6px;color:#bdb8cc;font-weight:normal;font-style:normal;">OVR: 46.4</div>
<div class="a" style="left:650.00px;top:481.37px;width:99.5px;height:33.8px;border:2px solid #b40cff;border-radius:6px;box-shadow:0 0 2px rgba(0,8,8,.7);overflow:hidden"><div class="a" style="left:0;right:0;bottom:0;height:3px;background:#6cf55a"></div></div>
<div class="t" style="left:649.75px;width:100px;text-align:center;top:491.73px;font-size:12.8px;font-weight:bold;color:#ffffff;text-shadow:0 0 2px rgba(10,8,40,.9);-webkit-text-stroke:0.35px #ffffff;">60.3–62.3</div>
<div class="t" style="left:546.50px;width:200px;top:480.57px;height:13.6px;text-align:right"><span style="display:inline-block;height:13.6px;line-height:13px;padding:0 5.5px;border-radius:7px;border:1px solid rgba(110,190,110,.35);background:rgba(60,110,70,.28);font-size:10.2px;font-weight:bold;color:#acfa9c;-webkit-text-stroke:0.25px #acfa9c;text-shadow:0 0 2px rgba(10,8,40,.9)">+0.077</span></div>
<div class="a" style="left:755.54px;top:481.37px;width:99.5px;height:33.8px;border:2px solid #b40cff;border-radius:6px;box-shadow:0 0 2px rgba(0,8,8,.7);overflow:hidden"><div class="a" style="left:0;right:0;bottom:0;height:3px;background:#6cf55a"></div></div>
<div class="t" style="left:755.29px;width:100px;text-align:center;top:491.73px;font-size:12.8px;font-weight:bold;color:#ffd20a;text-shadow:0 0 2px rgba(10,8,40,.9);-webkit-text-stroke:0.35px #ffd20a;">32.8</div>
<div class="t" style="left:652.04px;width:200px;top:480.57px;height:13.6px;text-align:right"><span style="display:inline-block;height:13.6px;line-height:13px;padding:0 5.5px;border-radius:7px;border:1px solid rgba(110,190,110,.35);background:rgba(60,110,70,.28);font-size:10.2px;font-weight:bold;color:#acfa9c;-webkit-text-stroke:0.25px #acfa9c;text-shadow:0 0 2px rgba(10,8,40,.9)">+0.07</span></div>
<div class="a" style="left:861.08px;top:481.37px;width:99.5px;height:33.8px;border:2px solid #b40cff;border-radius:6px;box-shadow:0 0 2px rgba(0,8,8,.7);overflow:hidden"><div class="a" style="left:0;right:0;bottom:0;height:3px;background:#6cf55a"></div></div>
<div class="t" style="left:860.83px;width:100px;text-align:center;top:491.73px;font-size:12.8px;font-weight:bold;color:#ff4535;text-shadow:0 0 2px rgba(10,8,40,.9);-webkit-text-stroke:0.35px #ff4535;">25–27</div>
<div class="t" style="left:757.58px;width:200px;top:480.57px;height:13.6px;text-align:right"><span style="display:inline-block;height:13.6px;line-height:13px;padding:0 5.5px;border-radius:7px;border:1px solid rgba(110,190,110,.35);background:rgba(60,110,70,.28);font-size:10.2px;font-weight:bold;color:#acfa9c;-webkit-text-stroke:0.25px #acfa9c;text-shadow:0 0 2px rgba(10,8,40,.9)">+0.05</span></div>
<div class="a" style="left:966.62px;top:481.37px;width:99.5px;height:33.8px;border:2px solid #b40cff;border-radius:6px;box-shadow:0 0 2px rgba(0,8,8,.7);overflow:hidden"><div class="a" style="left:0;right:0;bottom:0;height:3px;background:#6cf55a"></div></div>
<div class="t" style="left:966.37px;width:100px;text-align:center;top:491.73px;font-size:12.8px;font-weight:bold;color:#ffffff;text-shadow:0 0 2px rgba(10,8,40,.9);-webkit-text-stroke:0.35px #ffffff;">51.9</div>
<div class="t" style="left:863.12px;width:200px;top:480.57px;height:13.6px;text-align:right"><span style="display:inline-block;height:13.6px;line-height:13px;padding:0 5.5px;border-radius:7px;border:1px solid rgba(110,190,110,.35);background:rgba(60,110,70,.28);font-size:10.2px;font-weight:bold;color:#acfa9c;-webkit-text-stroke:0.25px #acfa9c;text-shadow:0 0 2px rgba(10,8,40,.9)">+0.055</span></div>
<div class="a" style="left:1072.16px;top:481.37px;width:99.5px;height:33.8px;border:2px solid #8a7cc0;border-radius:6px;box-shadow:0 0 2px rgba(0,8,8,.7);opacity:.6;overflow:hidden"><div class="a" style="left:0;right:0;bottom:0;height:3px;background:#6ab85a"></div></div>
<div class="t" style="left:1071.91px;width:100px;text-align:center;top:491.73px;font-size:12.8px;font-weight:bold;color:#ff4535;text-shadow:0 0 2px rgba(10,8,40,.9);-webkit-text-stroke:0.35px #ff4535;opacity:.52;">27.8–29.8</div>
<div class="t" style="left:968.66px;width:200px;top:480.57px;height:13.6px;opacity:.6;text-align:right"><span style="display:inline-block;height:13.6px;line-height:13px;padding:0 5.5px;border-radius:7px;border:1px solid rgba(110,190,110,.35);background:rgba(60,110,70,.28);font-size:10.2px;font-weight:bold;color:#acfa9c;-webkit-text-stroke:0.25px #acfa9c;text-shadow:0 0 2px rgba(10,8,40,.9)">+0.045</span></div>
<div class="a" style="left:1177.70px;top:481.37px;width:99.5px;height:33.8px;border:2px solid #8a7cc0;border-radius:6px;box-shadow:0 0 2px rgba(0,8,8,.7);opacity:.6;overflow:hidden"><div class="a" style="left:0;right:0;bottom:0;height:3px;background:#6ab85a"></div></div>
<div class="t" style="left:1177.45px;width:100px;text-align:center;top:491.73px;font-size:12.8px;font-weight:bold;color:#ff4535;text-shadow:0 0 2px rgba(10,8,40,.9);-webkit-text-stroke:0.35px #ff4535;opacity:.52;">27.6–29.6</div>
<div class="t" style="left:1074.20px;width:200px;top:480.57px;height:13.6px;opacity:.6;text-align:right"><span style="display:inline-block;height:13.6px;line-height:13px;padding:0 5.5px;border-radius:7px;border:1px solid rgba(110,190,110,.35);background:rgba(60,110,70,.28);font-size:10.2px;font-weight:bold;color:#acfa9c;-webkit-text-stroke:0.25px #acfa9c;text-shadow:0 0 2px rgba(10,8,40,.9)">+0.045</span></div>
<div class="a" style="left:1283.24px;top:481.37px;width:99.5px;height:33.8px;border:2px solid #8a7cc0;border-radius:6px;box-shadow:0 0 2px rgba(0,8,8,.7);opacity:.6;overflow:hidden"><div class="a" style="left:0;right:0;bottom:0;height:3px;background:#6ab85a"></div></div>
<div class="t" style="left:1282.99px;width:100px;text-align:center;top:491.73px;font-size:12.8px;font-weight:bold;color:#ffd20a;text-shadow:0 0 2px rgba(10,8,40,.9);-webkit-text-stroke:0.35px #ffd20a;opacity:.52;">30</div>
<div class="t" style="left:1179.74px;width:200px;top:480.57px;height:13.6px;opacity:.6;text-align:right"><span style="display:inline-block;height:13.6px;line-height:13px;padding:0 5.5px;border-radius:7px;border:1px solid rgba(110,190,110,.35);background:rgba(60,110,70,.28);font-size:10.2px;font-weight:bold;color:#acfa9c;-webkit-text-stroke:0.25px #acfa9c;text-shadow:0 0 2px rgba(10,8,40,.9)">+0.045</span></div>
<div class="a" style="left:1388.78px;top:481.37px;width:99.5px;height:33.8px;border:2px solid #b40cff;border-radius:6px;box-shadow:0 0 2px rgba(0,8,8,.7);overflow:hidden"><div class="a" style="left:0;right:0;bottom:0;height:3px;background:#6cf55a"></div></div>
<div class="t" style="left:1388.53px;width:100px;text-align:center;top:491.73px;font-size:12.8px;font-weight:bold;color:#ffffff;text-shadow:0 0 2px rgba(10,8,40,.9);-webkit-text-stroke:0.35px #ffffff;">50–52</div>
<div class="t" style="left:1285.28px;width:200px;top:480.57px;height:13.6px;text-align:right"><span style="display:inline-block;height:13.6px;line-height:13px;padding:0 5.5px;border-radius:7px;border:1px solid rgba(110,190,110,.35);background:rgba(60,110,70,.28);font-size:10.2px;font-weight:bold;color:#acfa9c;-webkit-text-stroke:0.25px #acfa9c;text-shadow:0 0 2px rgba(10,8,40,.9)">+0.088</span></div>
<div class="a" style="left:1494.32px;top:481.37px;width:99.5px;height:33.8px;border:2px solid #8a7cc0;border-radius:6px;box-shadow:0 0 2px rgba(0,8,8,.7);opacity:.6;overflow:hidden"><div class="a" style="left:0;right:0;bottom:0;height:3px;background:#6ab85a"></div></div>
<div class="t" style="left:1494.07px;width:100px;text-align:center;top:491.73px;font-size:12.8px;font-weight:bold;color:#ffd20a;text-shadow:0 0 2px rgba(10,8,40,.9);-webkit-text-stroke:0.35px #ffd20a;opacity:.52;">30</div>
<div class="t" style="left:1390.82px;width:200px;top:480.57px;height:13.6px;opacity:.6;text-align:right"><span style="display:inline-block;height:13.6px;line-height:13px;padding:0 5.5px;border-radius:7px;border:1px solid rgba(110,190,110,.35);background:rgba(60,110,70,.28);font-size:10.2px;font-weight:bold;color:#acfa9c;-webkit-text-stroke:0.25px #acfa9c;text-shadow:0 0 2px rgba(10,8,40,.9)">+0.045</span></div>
<div class="t" style="left:326.20px;top:539.48px;font-size:12px;color:#f4eeff;font-weight:bold;font-style:normal;-webkit-text-stroke:0.3px #f4eeff">Thiago Ramos</div>
<svg class="a" style="left:450.8px;top:538.14px" width="18" height="14" viewBox="0 0 18 14"><defs><clipPath id="fc2"><path d="M0 1.2 C6 -0.2 12 2.2 18 0.3 V12.3 C12 14 6 11.8 0 13.6 Z"/></clipPath></defs><g clip-path="url(#fc2)"><rect width="18" height="14" fill="#8db2f2"/><rect y="4.6" width="18" height="4.2" fill="#fbfbff"/><circle cx="8.8" cy="6.7" r="1.4" fill="#d0900c"/></g></svg>
<div class="a" style="left:481px;top:534.34px;width:37px;height:21px;border-radius:2px;background:#472a90"></div>
<div class="t" style="left:-0.50px;width:1000px;text-align:center;top:540.13px;font-size:11px;color:#e6dcff;font-weight:bold;font-style:normal;">CB</div>
<div class="t" style="left:61.60px;width:1000px;text-align:center;top:539.82px;font-size:11.6px;color:#bdb8cc;font-weight:normal;font-style:normal;">OVR: 49</div>
<div class="a" style="left:650.00px;top:528.54px;width:99.5px;height:33.8px;border:2px solid #8a7cc0;border-radius:6px;box-shadow:0 0 2px rgba(0,8,8,.7);opacity:.6;overflow:hidden"><div class="a" style="left:0;right:0;bottom:0;height:3px;background:#6ab85a"></div></div>
<div class="t" style="left:649.75px;width:100px;text-align:center;top:538.90px;font-size:12.8px;font-weight:bold;color:#ff4535;text-shadow:0 0 2px rgba(10,8,40,.9);-webkit-text-stroke:0.35px #ff4535;opacity:.52;">24.8–26.8</div>
<div class="t" style="left:546.50px;width:200px;top:527.74px;height:13.6px;opacity:.6;text-align:right"><span style="display:inline-block;height:13.6px;line-height:13px;padding:0 5.5px;border-radius:7px;border:1px solid rgba(110,190,110,.35);background:rgba(60,110,70,.28);font-size:10.2px;font-weight:bold;color:#acfa9c;-webkit-text-stroke:0.25px #acfa9c;text-shadow:0 0 2px rgba(10,8,40,.9)">+0.048</span></div>
<div class="a" style="left:755.54px;top:528.54px;width:99.5px;height:33.8px;border:2px solid #b40cff;border-radius:6px;box-shadow:0 0 2px rgba(0,8,8,.7);overflow:hidden"><div class="a" style="left:0;right:0;bottom:0;height:3px;background:#6cf55a"></div></div>
<div class="t" style="left:755.29px;width:100px;text-align:center;top:538.90px;font-size:12.8px;font-weight:bold;color:#ffd20a;text-shadow:0 0 2px rgba(10,8,40,.9);-webkit-text-stroke:0.35px #ffd20a;">30.3</div>
<div class="t" style="left:652.04px;width:200px;top:527.74px;height:13.6px;text-align:right"><span style="display:inline-block;height:13.6px;line-height:13px;padding:0 5.5px;border-radius:7px;border:1px solid rgba(110,190,110,.35);background:rgba(60,110,70,.28);font-size:10.2px;font-weight:bold;color:#acfa9c;-webkit-text-stroke:0.25px #acfa9c;text-shadow:0 0 2px rgba(10,8,40,.9)">+0.084</span></div>
<div class="a" style="left:861.08px;top:528.54px;width:99.5px;height:33.8px;border:2px solid #8a7cc0;border-radius:6px;box-shadow:0 0 2px rgba(0,8,8,.7);opacity:.6;overflow:hidden"><div class="a" style="left:0;right:0;bottom:0;height:3px;background:#6ab85a"></div></div>
<div class="t" style="left:860.83px;width:100px;text-align:center;top:538.90px;font-size:12.8px;font-weight:bold;color:#ff4535;text-shadow:0 0 2px rgba(10,8,40,.9);-webkit-text-stroke:0.35px #ff4535;opacity:.52;">24.5–28.5</div>
<div class="t" style="left:757.58px;width:200px;top:527.74px;height:13.6px;opacity:.6;text-align:right"><span style="display:inline-block;height:13.6px;line-height:13px;padding:0 5.5px;border-radius:7px;border:1px solid rgba(110,190,110,.35);background:rgba(60,110,70,.28);font-size:10.2px;font-weight:bold;color:#acfa9c;-webkit-text-stroke:0.25px #acfa9c;text-shadow:0 0 2px rgba(10,8,40,.9)">+0.036</span></div>
<div class="a" style="left:966.62px;top:528.54px;width:99.5px;height:33.8px;border:2px solid #8a7cc0;border-radius:6px;box-shadow:0 0 2px rgba(0,8,8,.7);opacity:.6;overflow:hidden"><div class="a" style="left:0;right:0;bottom:0;height:3px;background:#6ab85a"></div></div>
<div class="t" style="left:966.37px;width:100px;text-align:center;top:538.90px;font-size:12.8px;font-weight:bold;color:#ff4535;text-shadow:0 0 2px rgba(10,8,40,.9);-webkit-text-stroke:0.35px #ff4535;opacity:.52;">23.4–27.4</div>
<div class="t" style="left:863.12px;width:200px;top:527.74px;height:13.6px;opacity:.6;text-align:right"><span style="display:inline-block;height:13.6px;line-height:13px;padding:0 5.5px;border-radius:7px;border:1px solid rgba(110,190,110,.35);background:rgba(60,110,70,.28);font-size:10.2px;font-weight:bold;color:#acfa9c;-webkit-text-stroke:0.25px #acfa9c;text-shadow:0 0 2px rgba(10,8,40,.9)">+0.036</span></div>
<div class="a" style="left:1072.16px;top:528.54px;width:99.5px;height:33.8px;border:2px solid #b40cff;border-radius:6px;box-shadow:0 0 2px rgba(0,8,8,.7);overflow:hidden"><div class="a" style="left:0;right:0;bottom:0;height:3px;background:#6cf55a"></div></div>
<div class="t" style="left:1071.91px;width:100px;text-align:center;top:538.90px;font-size:12.8px;font-weight:bold;color:#ff4535;text-shadow:0 0 2px rgba(10,8,40,.9);-webkit-text-stroke:0.35px #ff4535;">26.4–30.4</div>
<div class="t" style="left:968.66px;width:200px;top:527.74px;height:13.6px;text-align:right"><span style="display:inline-block;height:13.6px;line-height:13px;padding:0 5.5px;border-radius:7px;border:1px solid rgba(110,190,110,.35);background:rgba(60,110,70,.28);font-size:10.2px;font-weight:bold;color:#acfa9c;-webkit-text-stroke:0.25px #acfa9c;text-shadow:0 0 2px rgba(10,8,40,.9)">+0.096</span></div>
<div class="a" style="left:1177.70px;top:528.54px;width:99.5px;height:33.8px;border:2px solid #b40cff;border-radius:6px;box-shadow:0 0 2px rgba(0,8,8,.7);overflow:hidden"><div class="a" style="left:0;right:0;bottom:0;height:3px;background:#6cf55a"></div></div>
<div class="t" style="left:1177.45px;width:100px;text-align:center;top:538.90px;font-size:12.8px;font-weight:bold;color:#ffffff;text-shadow:0 0 2px rgba(10,8,40,.9);-webkit-text-stroke:0.35px #ffffff;">59.2</div>
<div class="t" style="left:1074.20px;width:200px;top:527.74px;height:13.6px;text-align:right"><span style="display:inline-block;height:13.6px;line-height:13px;padding:0 5.5px;border-radius:7px;border:1px solid rgba(110,190,110,.35);background:rgba(60,110,70,.28);font-size:10.2px;font-weight:bold;color:#acfa9c;-webkit-text-stroke:0.25px #acfa9c;text-shadow:0 0 2px rgba(10,8,40,.9)">+0.106</span></div>
<div class="a" style="left:1283.24px;top:528.54px;width:99.5px;height:33.8px;border:2px solid #8a7cc0;border-radius:6px;box-shadow:0 0 2px rgba(0,8,8,.7);opacity:.6;overflow:hidden"><div class="a" style="left:0;right:0;bottom:0;height:3px;background:#6ab85a"></div></div>
<div class="t" style="left:1282.99px;width:100px;text-align:center;top:538.90px;font-size:12.8px;font-weight:bold;color:#ff4535;text-shadow:0 0 2px rgba(10,8,40,.9);-webkit-text-stroke:0.35px #ff4535;opacity:.52;">25.3</div>
<div class="t" style="left:1179.74px;width:200px;top:527.74px;height:13.6px;opacity:.6;text-align:right"><span style="display:inline-block;height:13.6px;line-height:13px;padding:0 5.5px;border-radius:7px;border:1px solid rgba(110,190,110,.35);background:rgba(60,110,70,.28);font-size:10.2px;font-weight:bold;color:#acfa9c;-webkit-text-stroke:0.25px #acfa9c;text-shadow:0 0 2px rgba(10,8,40,.9)">+0.054</span></div>
<div class="a" style="left:1388.78px;top:528.54px;width:99.5px;height:33.8px;border:2px solid #b40cff;border-radius:6px;box-shadow:0 0 2px rgba(0,8,8,.7);overflow:hidden"><div class="a" style="left:0;right:0;bottom:0;height:3px;background:#6cf55a"></div></div>
<div class="t" style="left:1388.53px;width:100px;text-align:center;top:538.90px;font-size:12.8px;font-weight:bold;color:#ffffff;text-shadow:0 0 2px rgba(10,8,40,.9);-webkit-text-stroke:0.35px #ffffff;">64–66</div>
<div class="t" style="left:1285.28px;width:200px;top:527.74px;height:13.6px;text-align:right"><span style="display:inline-block;height:13.6px;line-height:13px;padding:0 5.5px;border-radius:7px;border:1px solid rgba(110,190,110,.35);background:rgba(60,110,70,.28);font-size:10.2px;font-weight:bold;color:#acfa9c;-webkit-text-stroke:0.25px #acfa9c;text-shadow:0 0 2px rgba(10,8,40,.9)">+0.106</span></div>
<div class="a" style="left:1494.32px;top:528.54px;width:99.5px;height:33.8px;border:2px solid #b40cff;border-radius:6px;box-shadow:0 0 2px rgba(0,8,8,.7);overflow:hidden"><div class="a" style="left:0;right:0;bottom:0;height:3px;background:#6cf55a"></div></div>
<div class="t" style="left:1494.07px;width:100px;text-align:center;top:538.90px;font-size:12.8px;font-weight:bold;color:#ffffff;text-shadow:0 0 2px rgba(10,8,40,.9);-webkit-text-stroke:0.35px #ffffff;">54.4</div>
<div class="t" style="left:1390.82px;width:200px;top:527.74px;height:13.6px;text-align:right"><span style="display:inline-block;height:13.6px;line-height:13px;padding:0 5.5px;border-radius:7px;border:1px solid rgba(110,190,110,.35);background:rgba(60,110,70,.28);font-size:10.2px;font-weight:bold;color:#acfa9c;-webkit-text-stroke:0.25px #acfa9c;text-shadow:0 0 2px rgba(10,8,40,.9)">+0.106</span></div>
<div class="t" style="left:326.20px;top:586.65px;font-size:12px;color:#f4eeff;font-weight:bold;font-style:normal;-webkit-text-stroke:0.3px #f4eeff">Diogo Tavares</div>
<svg class="a" style="left:450.8px;top:585.31px" width="18" height="14" viewBox="0 0 18 14"><defs><clipPath id="fc3"><path d="M0 1.2 C6 -0.2 12 2.2 18 0.3 V12.3 C12 14 6 11.8 0 13.6 Z"/></clipPath></defs><g clip-path="url(#fc3)"><rect width="18" height="14" fill="#ee2a10"/><rect width="7" height="14" fill="#2f8a12"/><circle cx="7" cy="6.8" r="2.6" fill="#d8c020"/><circle cx="7" cy="6.8" r="1.3" fill="#b8d0ff"/></g></svg>
<div class="a" style="left:481px;top:581.51px;width:37px;height:21px;border-radius:2px;background:#472a90"></div>
<div class="t" style="left:-0.50px;width:1000px;text-align:center;top:587.30px;font-size:11px;color:#e6dcff;font-weight:bold;font-style:normal;">ST</div>
<div class="t" style="left:61.60px;width:1000px;text-align:center;top:586.99px;font-size:11.6px;color:#bdb8cc;font-weight:normal;font-style:normal;">OVR: 50.6</div>
<div class="a" style="left:650.00px;top:575.71px;width:99.5px;height:33.8px;border:2px solid #b40cff;border-radius:6px;box-shadow:0 0 2px rgba(0,8,8,.7);overflow:hidden"><div class="a" style="left:0;right:0;bottom:0;height:3px;background:#6cf55a"></div></div>
<div class="t" style="left:649.75px;width:100px;text-align:center;top:586.07px;font-size:12.8px;font-weight:bold;color:#ffffff;text-shadow:0 0 2px rgba(10,8,40,.9);-webkit-text-stroke:0.35px #ffffff;">59–63</div>
<div class="t" style="left:546.50px;width:200px;top:574.91px;height:13.6px;text-align:right"><span style="display:inline-block;height:13.6px;line-height:13px;padding:0 5.5px;border-radius:7px;border:1px solid rgba(110,190,110,.35);background:rgba(60,110,70,.28);font-size:10.2px;font-weight:bold;color:#acfa9c;-webkit-text-stroke:0.25px #acfa9c;text-shadow:0 0 2px rgba(10,8,40,.9)">+0.085</span></div>
<div class="a" style="left:755.54px;top:575.71px;width:99.5px;height:33.8px;border:2px solid #b40cff;border-radius:6px;box-shadow:0 0 2px rgba(0,8,8,.7);overflow:hidden"><div class="a" style="left:0;right:0;bottom:0;height:3px;background:#6cf55a"></div></div>
<div class="t" style="left:755.29px;width:100px;text-align:center;top:586.07px;font-size:12.8px;font-weight:bold;color:#ffffff;text-shadow:0 0 2px rgba(10,8,40,.9);-webkit-text-stroke:0.35px #ffffff;">55.6–57.6</div>
<div class="t" style="left:652.04px;width:200px;top:574.91px;height:13.6px;text-align:right"><span style="display:inline-block;height:13.6px;line-height:13px;padding:0 5.5px;border-radius:7px;border:1px solid rgba(110,190,110,.35);background:rgba(60,110,70,.28);font-size:10.2px;font-weight:bold;color:#acfa9c;-webkit-text-stroke:0.25px #acfa9c;text-shadow:0 0 2px rgba(10,8,40,.9)">+0.085</span></div>
<div class="a" style="left:861.08px;top:575.71px;width:99.5px;height:33.8px;border:2px solid #b40cff;border-radius:6px;box-shadow:0 0 2px rgba(0,8,8,.7);overflow:hidden"><div class="a" style="left:0;right:0;bottom:0;height:3px;background:#6cf55a"></div></div>
<div class="t" style="left:860.83px;width:100px;text-align:center;top:586.07px;font-size:12.8px;font-weight:bold;color:#ffd20a;text-shadow:0 0 2px rgba(10,8,40,.9);-webkit-text-stroke:0.35px #ffd20a;">30.3</div>
<div class="t" style="left:757.58px;width:200px;top:574.91px;height:13.6px;text-align:right"><span style="display:inline-block;height:13.6px;line-height:13px;padding:0 5.5px;border-radius:7px;border:1px solid rgba(110,190,110,.35);background:rgba(60,110,70,.28);font-size:10.2px;font-weight:bold;color:#acfa9c;-webkit-text-stroke:0.25px #acfa9c;text-shadow:0 0 2px rgba(10,8,40,.9)">+0.055</span></div>
<div class="a" style="left:966.62px;top:575.71px;width:99.5px;height:33.8px;border:2px solid #8a7cc0;border-radius:6px;box-shadow:0 0 2px rgba(0,8,8,.7);opacity:.6;overflow:hidden"><div class="a" style="left:0;right:0;bottom:0;height:3px;background:#6ab85a"></div></div>
<div class="t" style="left:966.37px;width:100px;text-align:center;top:586.07px;font-size:12.8px;font-weight:bold;color:#ff4535;text-shadow:0 0 2px rgba(10,8,40,.9);-webkit-text-stroke:0.35px #ff4535;opacity:.52;">28.5</div>
<div class="t" style="left:863.12px;width:200px;top:574.91px;height:13.6px;opacity:.6;text-align:right"><span style="display:inline-block;height:13.6px;line-height:13px;padding:0 5.5px;border-radius:7px;border:1px solid rgba(110,190,110,.35);background:rgba(60,110,70,.28);font-size:10.2px;font-weight:bold;color:#acfa9c;-webkit-text-stroke:0.25px #acfa9c;text-shadow:0 0 2px rgba(10,8,40,.9)">+0.033</span></div>
<div class="a" style="left:1072.16px;top:575.71px;width:99.5px;height:33.8px;border:2px solid #b40cff;border-radius:6px;box-shadow:0 0 2px rgba(0,8,8,.7);overflow:hidden"><div class="a" style="left:0;right:0;bottom:0;height:3px;background:#6cf55a"></div></div>
<div class="t" style="left:1071.91px;width:100px;text-align:center;top:586.07px;font-size:12.8px;font-weight:bold;color:#ff4535;text-shadow:0 0 2px rgba(10,8,40,.9);-webkit-text-stroke:0.35px #ff4535;">25.1–27.1</div>
<div class="t" style="left:968.66px;width:200px;top:574.91px;height:13.6px;text-align:right"><span style="display:inline-block;height:13.6px;line-height:13px;padding:0 5.5px;border-radius:7px;border:1px solid rgba(110,190,110,.35);background:rgba(60,110,70,.28);font-size:10.2px;font-weight:bold;color:#acfa9c;-webkit-text-stroke:0.25px #acfa9c;text-shadow:0 0 2px rgba(10,8,40,.9)">+0.088</span></div>
<div class="a" style="left:1177.70px;top:575.71px;width:99.5px;height:33.8px;border:2px solid #8a7cc0;border-radius:6px;box-shadow:0 0 2px rgba(0,8,8,.7);opacity:.6;overflow:hidden"><div class="a" style="left:0;right:0;bottom:0;height:3px;background:#6ab85a"></div></div>
<div class="t" style="left:1177.45px;width:100px;text-align:center;top:586.07px;font-size:12.8px;font-weight:bold;color:#ff4535;text-shadow:0 0 2px rgba(10,8,40,.9);-webkit-text-stroke:0.35px #ff4535;opacity:.52;">27.9</div>
<div class="t" style="left:1074.20px;width:200px;top:574.91px;height:13.6px;opacity:.6;text-align:right"><span style="display:inline-block;height:13.6px;line-height:13px;padding:0 5.5px;border-radius:7px;border:1px solid rgba(110,190,110,.35);background:rgba(60,110,70,.28);font-size:10.2px;font-weight:bold;color:#acfa9c;-webkit-text-stroke:0.25px #acfa9c;text-shadow:0 0 2px rgba(10,8,40,.9)">+0.049</span></div>
<div class="a" style="left:1283.24px;top:575.71px;width:99.5px;height:33.8px;border:2px solid #b40cff;border-radius:6px;box-shadow:0 0 2px rgba(0,8,8,.7);overflow:hidden"><div class="a" style="left:0;right:0;bottom:0;height:3px;background:#6cf55a"></div></div>
<div class="t" style="left:1282.99px;width:100px;text-align:center;top:586.07px;font-size:12.8px;font-weight:bold;color:#ffffff;text-shadow:0 0 2px rgba(10,8,40,.9);-webkit-text-stroke:0.35px #ffffff;">62–66</div>
<div class="t" style="left:1179.74px;width:200px;top:574.91px;height:13.6px;text-align:right"><span style="display:inline-block;height:13.6px;line-height:13px;padding:0 5.5px;border-radius:7px;border:1px solid rgba(110,190,110,.35);background:rgba(60,110,70,.28);font-size:10.2px;font-weight:bold;color:#acfa9c;-webkit-text-stroke:0.25px #acfa9c;text-shadow:0 0 2px rgba(10,8,40,.9)">+0.097</span></div>
<div class="a" style="left:1388.78px;top:575.71px;width:99.5px;height:33.8px;border:2px solid #8a7cc0;border-radius:6px;box-shadow:0 0 2px rgba(0,8,8,.7);opacity:.6;overflow:hidden"><div class="a" style="left:0;right:0;bottom:0;height:3px;background:#6ab85a"></div></div>
<div class="t" style="left:1388.53px;width:100px;text-align:center;top:586.07px;font-size:12.8px;font-weight:bold;color:#ffd20a;text-shadow:0 0 2px rgba(10,8,40,.9);-webkit-text-stroke:0.35px #ffd20a;opacity:.52;">30.8</div>
<div class="t" style="left:1285.28px;width:200px;top:574.91px;height:13.6px;opacity:.6;text-align:right"><span style="display:inline-block;height:13.6px;line-height:13px;padding:0 5.5px;border-radius:7px;border:1px solid rgba(110,190,110,.35);background:rgba(60,110,70,.28);font-size:10.2px;font-weight:bold;color:#acfa9c;-webkit-text-stroke:0.25px #acfa9c;text-shadow:0 0 2px rgba(10,8,40,.9)">+0.049</span></div>
<div class="a" style="left:1494.32px;top:575.71px;width:99.5px;height:33.8px;border:2px solid #8a7cc0;border-radius:6px;box-shadow:0 0 2px rgba(0,8,8,.7);opacity:.6;overflow:hidden"><div class="a" style="left:0;right:0;bottom:0;height:3px;background:#6ab85a"></div></div>
<div class="t" style="left:1494.07px;width:100px;text-align:center;top:586.07px;font-size:12.8px;font-weight:bold;color:#ffd20a;text-shadow:0 0 2px rgba(10,8,40,.9);-webkit-text-stroke:0.35px #ffd20a;opacity:.52;">31</div>
<div class="t" style="left:1390.82px;width:200px;top:574.91px;height:13.6px;opacity:.6;text-align:right"><span style="display:inline-block;height:13.6px;line-height:13px;padding:0 5.5px;border-radius:7px;border:1px solid rgba(110,190,110,.35);background:rgba(60,110,70,.28);font-size:10.2px;font-weight:bold;color:#acfa9c;-webkit-text-stroke:0.25px #acfa9c;text-shadow:0 0 2px rgba(10,8,40,.9)">+0.049</span></div>
<div class="t" style="left:326.20px;top:633.82px;font-size:12px;color:#f4eeff;font-weight:bold;font-style:normal;-webkit-text-stroke:0.3px #f4eeff">Finley Walker</div>
<svg class="a" style="left:450.8px;top:632.48px" width="18" height="14" viewBox="0 0 18 14"><defs><clipPath id="fc4"><path d="M0 1.2 C6 -0.2 12 2.2 18 0.3 V12.3 C12 14 6 11.8 0 13.6 Z"/></clipPath></defs><g clip-path="url(#fc4)"><rect width="18" height="14" fill="#f8f8fc"/><rect x="7.6" width="2.8" height="14" fill="#d42030"/><rect y="5.4" width="18" height="2.8" fill="#d42030"/></g></svg>
<div class="a" style="left:481px;top:628.68px;width:37px;height:21px;border-radius:2px;background:#472a90"></div>
<div class="t" style="left:-0.50px;width:1000px;text-align:center;top:634.47px;font-size:11px;color:#e6dcff;font-weight:bold;font-style:normal;">ST</div>
<div class="t" style="left:61.60px;width:1000px;text-align:center;top:634.16px;font-size:11.6px;color:#bdb8cc;font-weight:normal;font-style:normal;">OVR: 50</div>
<div class="a" style="left:650.00px;top:622.88px;width:99.5px;height:33.8px;border:2px solid #b40cff;border-radius:6px;box-shadow:0 0 2px rgba(0,8,8,.7);overflow:hidden"><div class="a" style="left:0;right:0;bottom:0;height:3px;background:#6cf55a"></div></div>
<div class="t" style="left:649.75px;width:100px;text-align:center;top:633.24px;font-size:12.8px;font-weight:bold;color:#ffffff;text-shadow:0 0 2px rgba(10,8,40,.9);-webkit-text-stroke:0.35px #ffffff;">59.9–61.9</div>
<div class="t" style="left:546.50px;width:200px;top:622.08px;height:13.6px;text-align:right"><span style="display:inline-block;height:13.6px;line-height:13px;padding:0 5.5px;border-radius:7px;border:1px solid rgba(110,190,110,.35);background:rgba(60,110,70,.28);font-size:10.2px;font-weight:bold;color:#acfa9c;-webkit-text-stroke:0.25px #acfa9c;text-shadow:0 0 2px rgba(10,8,40,.9)">+0.096</span></div>
<div class="a" style="left:755.54px;top:622.88px;width:99.5px;height:33.8px;border:2px solid #b40cff;border-radius:6px;box-shadow:0 0 2px rgba(0,8,8,.7);overflow:hidden"><div class="a" style="left:0;right:0;bottom:0;height:3px;background:#6cf55a"></div></div>
<div class="t" style="left:755.29px;width:100px;text-align:center;top:633.24px;font-size:12.8px;font-weight:bold;color:#ffffff;text-shadow:0 0 2px rgba(10,8,40,.9);-webkit-text-stroke:0.35px #ffffff;">53.7–55.7</div>
<div class="t" style="left:652.04px;width:200px;top:622.08px;height:13.6px;text-align:right"><span style="display:inline-block;height:13.6px;line-height:13px;padding:0 5.5px;border-radius:7px;border:1px solid rgba(110,190,110,.35);background:rgba(60,110,70,.28);font-size:10.2px;font-weight:bold;color:#acfa9c;-webkit-text-stroke:0.25px #acfa9c;text-shadow:0 0 2px rgba(10,8,40,.9)">+0.096</span></div>
<div class="a" style="left:861.08px;top:622.88px;width:99.5px;height:33.8px;border:2px solid #8a7cc0;border-radius:6px;box-shadow:0 0 2px rgba(0,8,8,.7);opacity:.6;overflow:hidden"><div class="a" style="left:0;right:0;bottom:0;height:3px;background:#6ab85a"></div></div>
<div class="t" style="left:860.83px;width:100px;text-align:center;top:633.24px;font-size:12.8px;font-weight:bold;color:#ff4535;text-shadow:0 0 2px rgba(10,8,40,.9);-webkit-text-stroke:0.35px #ff4535;opacity:.52;">23.3–25.3</div>
<div class="t" style="left:757.58px;width:200px;top:622.08px;height:13.6px;opacity:.6;text-align:right"><span style="display:inline-block;height:13.6px;line-height:13px;padding:0 5.5px;border-radius:7px;border:1px solid rgba(110,190,110,.35);background:rgba(60,110,70,.28);font-size:10.2px;font-weight:bold;color:#acfa9c;-webkit-text-stroke:0.25px #acfa9c;text-shadow:0 0 2px rgba(10,8,40,.9)">+0.038</span></div>
<div class="a" style="left:966.62px;top:622.88px;width:99.5px;height:33.8px;border:2px solid #8a7cc0;border-radius:6px;box-shadow:0 0 2px rgba(0,8,8,.7);opacity:.6;overflow:hidden"><div class="a" style="left:0;right:0;bottom:0;height:3px;background:#6ab85a"></div></div>
<div class="t" style="left:966.37px;width:100px;text-align:center;top:633.24px;font-size:12.8px;font-weight:bold;color:#ff4535;text-shadow:0 0 2px rgba(10,8,40,.9);-webkit-text-stroke:0.35px #ff4535;opacity:.52;">24.9–26.9</div>
<div class="t" style="left:863.12px;width:200px;top:622.08px;height:13.6px;opacity:.6;text-align:right"><span style="display:inline-block;height:13.6px;line-height:13px;padding:0 5.5px;border-radius:7px;border:1px solid rgba(110,190,110,.35);background:rgba(60,110,70,.28);font-size:10.2px;font-weight:bold;color:#acfa9c;-webkit-text-stroke:0.25px #acfa9c;text-shadow:0 0 2px rgba(10,8,40,.9)">+0.038</span></div>
<div class="a" style="left:1072.16px;top:622.88px;width:99.5px;height:33.8px;border:2px solid #8a7cc0;border-radius:6px;box-shadow:0 0 2px rgba(0,8,8,.7);opacity:.6;overflow:hidden"><div class="a" style="left:0;right:0;bottom:0;height:3px;background:#6ab85a"></div></div>
<div class="t" style="left:1071.91px;width:100px;text-align:center;top:633.24px;font-size:12.8px;font-weight:bold;color:#ff4535;text-shadow:0 0 2px rgba(10,8,40,.9);-webkit-text-stroke:0.35px #ff4535;opacity:.52;">21.8–23.8</div>
<div class="t" style="left:968.66px;width:200px;top:622.08px;height:13.6px;opacity:.6;text-align:right"><span style="display:inline-block;height:13.6px;line-height:13px;padding:0 5.5px;border-radius:7px;border:1px solid rgba(110,190,110,.35);background:rgba(60,110,70,.28);font-size:10.2px;font-weight:bold;color:#acfa9c;-webkit-text-stroke:0.25px #acfa9c;text-shadow:0 0 2px rgba(10,8,40,.9)">+0.056</span></div>
<div class="a" style="left:1177.70px;top:622.88px;width:99.5px;height:33.8px;border:2px solid #b40cff;border-radius:6px;box-shadow:0 0 2px rgba(0,8,8,.7);overflow:hidden"><div class="a" style="left:0;right:0;bottom:0;height:3px;background:#6cf55a"></div></div>
<div class="t" style="left:1177.45px;width:100px;text-align:center;top:633.24px;font-size:12.8px;font-weight:bold;color:#ff4535;text-shadow:0 0 2px rgba(10,8,40,.9);-webkit-text-stroke:0.35px #ff4535;">24.1</div>
<div class="t" style="left:1074.20px;width:200px;top:622.08px;height:13.6px;text-align:right"><span style="display:inline-block;height:13.6px;line-height:13px;padding:0 5.5px;border-radius:7px;border:1px solid rgba(110,190,110,.35);background:rgba(60,110,70,.28);font-size:10.2px;font-weight:bold;color:#acfa9c;-webkit-text-stroke:0.25px #acfa9c;text-shadow:0 0 2px rgba(10,8,40,.9)">+0.1</span></div>
<div class="a" style="left:1283.24px;top:622.88px;width:99.5px;height:33.8px;border:2px solid #b40cff;border-radius:6px;box-shadow:0 0 2px rgba(0,8,8,.7);overflow:hidden"><div class="a" style="left:0;right:0;bottom:0;height:3px;background:#6cf55a"></div></div>
<div class="t" style="left:1282.99px;width:100px;text-align:center;top:633.24px;font-size:12.8px;font-weight:bold;color:#ffffff;text-shadow:0 0 2px rgba(10,8,40,.9);-webkit-text-stroke:0.35px #ffffff;">61.8–63.8</div>
<div class="t" style="left:1179.74px;width:200px;top:622.08px;height:13.6px;text-align:right"><span style="display:inline-block;height:13.6px;line-height:13px;padding:0 5.5px;border-radius:7px;border:1px solid rgba(110,190,110,.35);background:rgba(60,110,70,.28);font-size:10.2px;font-weight:bold;color:#acfa9c;-webkit-text-stroke:0.25px #acfa9c;text-shadow:0 0 2px rgba(10,8,40,.9)">+0.11</span></div>
<div class="a" style="left:1388.78px;top:622.88px;width:99.5px;height:33.8px;border:2px solid #b40cff;border-radius:6px;box-shadow:0 0 2px rgba(0,8,8,.7);overflow:hidden"><div class="a" style="left:0;right:0;bottom:0;height:3px;background:#6cf55a"></div></div>
<div class="t" style="left:1388.53px;width:100px;text-align:center;top:633.24px;font-size:12.8px;font-weight:bold;color:#ffd20a;text-shadow:0 0 2px rgba(10,8,40,.9);-webkit-text-stroke:0.35px #ffd20a;">33.8</div>
<div class="t" style="left:1285.28px;width:200px;top:622.08px;height:13.6px;text-align:right"><span style="display:inline-block;height:13.6px;line-height:13px;padding:0 5.5px;border-radius:7px;border:1px solid rgba(110,190,110,.35);background:rgba(60,110,70,.28);font-size:10.2px;font-weight:bold;color:#acfa9c;-webkit-text-stroke:0.25px #acfa9c;text-shadow:0 0 2px rgba(10,8,40,.9)">+0.1</span></div>
<div class="a" style="left:1494.32px;top:622.88px;width:99.5px;height:33.8px;border:2px solid #8a7cc0;border-radius:6px;box-shadow:0 0 2px rgba(0,8,8,.7);opacity:.6;overflow:hidden"><div class="a" style="left:0;right:0;bottom:0;height:3px;background:#6ab85a"></div></div>
<div class="t" style="left:1494.07px;width:100px;text-align:center;top:633.24px;font-size:12.8px;font-weight:bold;color:#ffd20a;text-shadow:0 0 2px rgba(10,8,40,.9);-webkit-text-stroke:0.35px #ffd20a;opacity:.52;">31–35</div>
<div class="t" style="left:1390.82px;width:200px;top:622.08px;height:13.6px;opacity:.6;text-align:right"><span style="display:inline-block;height:13.6px;line-height:13px;padding:0 5.5px;border-radius:7px;border:1px solid rgba(110,190,110,.35);background:rgba(60,110,70,.28);font-size:10.2px;font-weight:bold;color:#acfa9c;-webkit-text-stroke:0.25px #acfa9c;text-shadow:0 0 2px rgba(10,8,40,.9)">+0.056</span></div>
<div class="t" style="left:326.20px;top:680.99px;font-size:12px;color:#f4eeff;font-weight:bold;font-style:normal;-webkit-text-stroke:0.3px #f4eeff">Sergio Díaz</div>
<svg class="a" style="left:450.8px;top:679.65px" width="18" height="14" viewBox="0 0 18 14"><defs><clipPath id="fc5"><path d="M0 1.2 C6 -0.2 12 2.2 18 0.3 V12.3 C12 14 6 11.8 0 13.6 Z"/></clipPath></defs><g clip-path="url(#fc5)"><rect width="18" height="14" fill="#c81c14"/><rect y="3.5" width="18" height="6.6" fill="#f4d010"/><rect x="4.5" y="5" width="2.6" height="3.4" rx="1" fill="#a82818"/></g></svg>
<div class="a" style="left:481px;top:675.85px;width:37px;height:21px;border-radius:2px;background:#472a90"></div>
<div class="t" style="left:-0.50px;width:1000px;text-align:center;top:681.64px;font-size:11px;color:#e6dcff;font-weight:bold;font-style:normal;">RW</div>
<div class="t" style="left:61.60px;width:1000px;text-align:center;top:681.33px;font-size:11.6px;color:#bdb8cc;font-weight:normal;font-style:normal;">OVR: 48</div>
<div class="a" style="left:650.00px;top:670.05px;width:99.5px;height:33.8px;border:2px solid #b40cff;border-radius:6px;box-shadow:0 0 2px rgba(0,8,8,.7);overflow:hidden"><div class="a" style="left:0;right:0;bottom:0;height:3px;background:#6cf55a"></div></div>
<div class="t" style="left:649.75px;width:100px;text-align:center;top:680.41px;font-size:12.8px;font-weight:bold;color:#ffffff;text-shadow:0 0 2px rgba(10,8,40,.9);-webkit-text-stroke:0.35px #ffffff;">55.4–59.4</div>
<div class="t" style="left:546.50px;width:200px;top:669.25px;height:13.6px;text-align:right"><span style="display:inline-block;height:13.6px;line-height:13px;padding:0 5.5px;border-radius:7px;border:1px solid rgba(110,190,110,.35);background:rgba(60,110,70,.28);font-size:10.2px;font-weight:bold;color:#acfa9c;-webkit-text-stroke:0.25px #acfa9c;text-shadow:0 0 2px rgba(10,8,40,.9)">+0.077</span></div>
<div class="a" style="left:755.54px;top:670.05px;width:99.5px;height:33.8px;border:2px solid #8a7cc0;border-radius:6px;box-shadow:0 0 2px rgba(0,8,8,.7);opacity:.6;overflow:hidden"><div class="a" style="left:0;right:0;bottom:0;height:3px;background:#6ab85a"></div></div>
<div class="t" style="left:755.29px;width:100px;text-align:center;top:680.41px;font-size:12.8px;font-weight:bold;color:#ffffff;text-shadow:0 0 2px rgba(10,8,40,.9);-webkit-text-stroke:0.35px #ffffff;opacity:.52;">54.2–56.2</div>
<div class="t" style="left:652.04px;width:200px;top:669.25px;height:13.6px;opacity:.6;text-align:right"><span style="display:inline-block;height:13.6px;line-height:13px;padding:0 5.5px;border-radius:7px;border:1px solid rgba(110,190,110,.35);background:rgba(60,110,70,.28);font-size:10.2px;font-weight:bold;color:#acfa9c;-webkit-text-stroke:0.25px #acfa9c;text-shadow:0 0 2px rgba(10,8,40,.9)">+0.044</span></div>
<div class="a" style="left:861.08px;top:670.05px;width:99.5px;height:33.8px;border:2px solid #8a7cc0;border-radius:6px;box-shadow:0 0 2px rgba(0,8,8,.7);opacity:.6;overflow:hidden"><div class="a" style="left:0;right:0;bottom:0;height:3px;background:#6ab85a"></div></div>
<div class="t" style="left:860.83px;width:100px;text-align:center;top:680.41px;font-size:12.8px;font-weight:bold;color:#ff4535;text-shadow:0 0 2px rgba(10,8,40,.9);-webkit-text-stroke:0.35px #ff4535;opacity:.52;">26.5</div>
<div class="t" style="left:757.58px;width:200px;top:669.25px;height:13.6px;opacity:.6;text-align:right"><span style="display:inline-block;height:13.6px;line-height:13px;padding:0 5.5px;border-radius:7px;border:1px solid rgba(110,190,110,.35);background:rgba(60,110,70,.28);font-size:10.2px;font-weight:bold;color:#acfa9c;-webkit-text-stroke:0.25px #acfa9c;text-shadow:0 0 2px rgba(10,8,40,.9)">+0.03</span></div>
<div class="a" style="left:966.62px;top:670.05px;width:99.5px;height:33.8px;border:2px solid #b40cff;border-radius:6px;box-shadow:0 0 2px rgba(0,8,8,.7);overflow:hidden"><div class="a" style="left:0;right:0;bottom:0;height:3px;background:#6cf55a"></div></div>
<div class="t" style="left:966.37px;width:100px;text-align:center;top:680.41px;font-size:12.8px;font-weight:bold;color:#ff4535;text-shadow:0 0 2px rgba(10,8,40,.9);-webkit-text-stroke:0.35px #ff4535;">26.5–30.5</div>
<div class="t" style="left:863.12px;width:200px;top:669.25px;height:13.6px;text-align:right"><span style="display:inline-block;height:13.6px;line-height:13px;padding:0 5.5px;border-radius:7px;border:1px solid rgba(110,190,110,.35);background:rgba(60,110,70,.28);font-size:10.2px;font-weight:bold;color:#acfa9c;-webkit-text-stroke:0.25px #acfa9c;text-shadow:0 0 2px rgba(10,8,40,.9)">+0.05</span></div>
<div class="a" style="left:1072.16px;top:670.05px;width:99.5px;height:33.8px;border:2px solid #b40cff;border-radius:6px;box-shadow:0 0 2px rgba(0,8,8,.7);overflow:hidden"><div class="a" style="left:0;right:0;bottom:0;height:3px;background:#6cf55a"></div></div>
<div class="t" style="left:1071.91px;width:100px;text-align:center;top:680.41px;font-size:12.8px;font-weight:bold;color:#ffd20a;text-shadow:0 0 2px rgba(10,8,40,.9);-webkit-text-stroke:0.35px #ffd20a;">31.3</div>
<div class="t" style="left:968.66px;width:200px;top:669.25px;height:13.6px;text-align:right"><span style="display:inline-block;height:13.6px;line-height:13px;padding:0 5.5px;border-radius:7px;border:1px solid rgba(110,190,110,.35);background:rgba(60,110,70,.28);font-size:10.2px;font-weight:bold;color:#acfa9c;-webkit-text-stroke:0.25px #acfa9c;text-shadow:0 0 2px rgba(10,8,40,.9)">+0.08</span></div>
<div class="a" style="left:1177.70px;top:670.05px;width:99.5px;height:33.8px;border:2px solid #b40cff;border-radius:6px;box-shadow:0 0 2px rgba(0,8,8,.7);overflow:hidden"><div class="a" style="left:0;right:0;bottom:0;height:3px;background:#6cf55a"></div></div>
<div class="t" style="left:1177.45px;width:100px;text-align:center;top:680.41px;font-size:12.8px;font-weight:bold;color:#ffd20a;text-shadow:0 0 2px rgba(10,8,40,.9);-webkit-text-stroke:0.35px #ffd20a;">30.6–32.6</div>
<div class="t" style="left:1074.20px;width:200px;top:669.25px;height:13.6px;text-align:right"><span style="display:inline-block;height:13.6px;line-height:13px;padding:0 5.5px;border-radius:7px;border:1px solid rgba(110,190,110,.35);background:rgba(60,110,70,.28);font-size:10.2px;font-weight:bold;color:#acfa9c;-webkit-text-stroke:0.25px #acfa9c;text-shadow:0 0 2px rgba(10,8,40,.9)">+0.08</span></div>
<div class="a" style="left:1283.24px;top:670.05px;width:99.5px;height:33.8px;border:2px solid #8a7cc0;border-radius:6px;box-shadow:0 0 2px rgba(0,8,8,.7);opacity:.6;overflow:hidden"><div class="a" style="left:0;right:0;bottom:0;height:3px;background:#6ab85a"></div></div>
<div class="t" style="left:1282.99px;width:100px;text-align:center;top:680.41px;font-size:12.8px;font-weight:bold;color:#ffffff;text-shadow:0 0 2px rgba(10,8,40,.9);-webkit-text-stroke:0.35px #ffffff;opacity:.52;">56–58</div>
<div class="t" style="left:1179.74px;width:200px;top:669.25px;height:13.6px;opacity:.6;text-align:right"><span style="display:inline-block;height:13.6px;line-height:13px;padding:0 5.5px;border-radius:7px;border:1px solid rgba(110,190,110,.35);background:rgba(60,110,70,.28);font-size:10.2px;font-weight:bold;color:#acfa9c;-webkit-text-stroke:0.25px #acfa9c;text-shadow:0 0 2px rgba(10,8,40,.9)">+0.05</span></div>
<div class="a" style="left:1388.78px;top:670.05px;width:99.5px;height:33.8px;border:2px solid #b40cff;border-radius:6px;box-shadow:0 0 2px rgba(0,8,8,.7);overflow:hidden"><div class="a" style="left:0;right:0;bottom:0;height:3px;background:#6cf55a"></div></div>
<div class="t" style="left:1388.53px;width:100px;text-align:center;top:680.41px;font-size:12.8px;font-weight:bold;color:#ffd20a;text-shadow:0 0 2px rgba(10,8,40,.9);-webkit-text-stroke:0.35px #ffd20a;">30.8</div>
<div class="t" style="left:1285.28px;width:200px;top:669.25px;height:13.6px;text-align:right"><span style="display:inline-block;height:13.6px;line-height:13px;padding:0 5.5px;border-radius:7px;border:1px solid rgba(110,190,110,.35);background:rgba(60,110,70,.28);font-size:10.2px;font-weight:bold;color:#acfa9c;-webkit-text-stroke:0.25px #acfa9c;text-shadow:0 0 2px rgba(10,8,40,.9)">+0.08</span></div>
<div class="a" style="left:1494.32px;top:670.05px;width:99.5px;height:33.8px;border:2px solid #8a7cc0;border-radius:6px;box-shadow:0 0 2px rgba(0,8,8,.7);opacity:.6;overflow:hidden"><div class="a" style="left:0;right:0;bottom:0;height:3px;background:#6ab85a"></div></div>
<div class="t" style="left:1494.07px;width:100px;text-align:center;top:680.41px;font-size:12.8px;font-weight:bold;color:#ffd20a;text-shadow:0 0 2px rgba(10,8,40,.9);-webkit-text-stroke:0.35px #ffd20a;opacity:.52;">30.5</div>
<div class="t" style="left:1390.82px;width:200px;top:669.25px;height:13.6px;opacity:.6;text-align:right"><span style="display:inline-block;height:13.6px;line-height:13px;padding:0 5.5px;border-radius:7px;border:1px solid rgba(110,190,110,.35);background:rgba(60,110,70,.28);font-size:10.2px;font-weight:bold;color:#acfa9c;-webkit-text-stroke:0.25px #acfa9c;text-shadow:0 0 2px rgba(10,8,40,.9)">+0.045</span></div>
<div class="t" style="left:309.20px;top:733.60px;font-size:11.1px;color:#c2b8da;font-weight:normal;font-style:italic;">Click an active attribute to deselect it.</div>
<div class="t" style="left:612.30px;width:1000px;text-align:right;top:733.89px;font-size:11px;color:#c2b8da;font-weight:normal;font-style:italic;">Players continue training automatically when you skip a session.</div>
<div class="a" style="left:1555px;top:753px;width:57px;height:30px;border-radius:5px;background:#555a6e"></div>
<div class="t" style="left:1083.50px;width:1000px;text-align:center;top:761.59px;font-size:12.3px;color:#fffbe6;font-weight:bold;font-style:normal;-webkit-text-stroke:0.3px #fffbe6">Close</div>
</div>
</body></html>
